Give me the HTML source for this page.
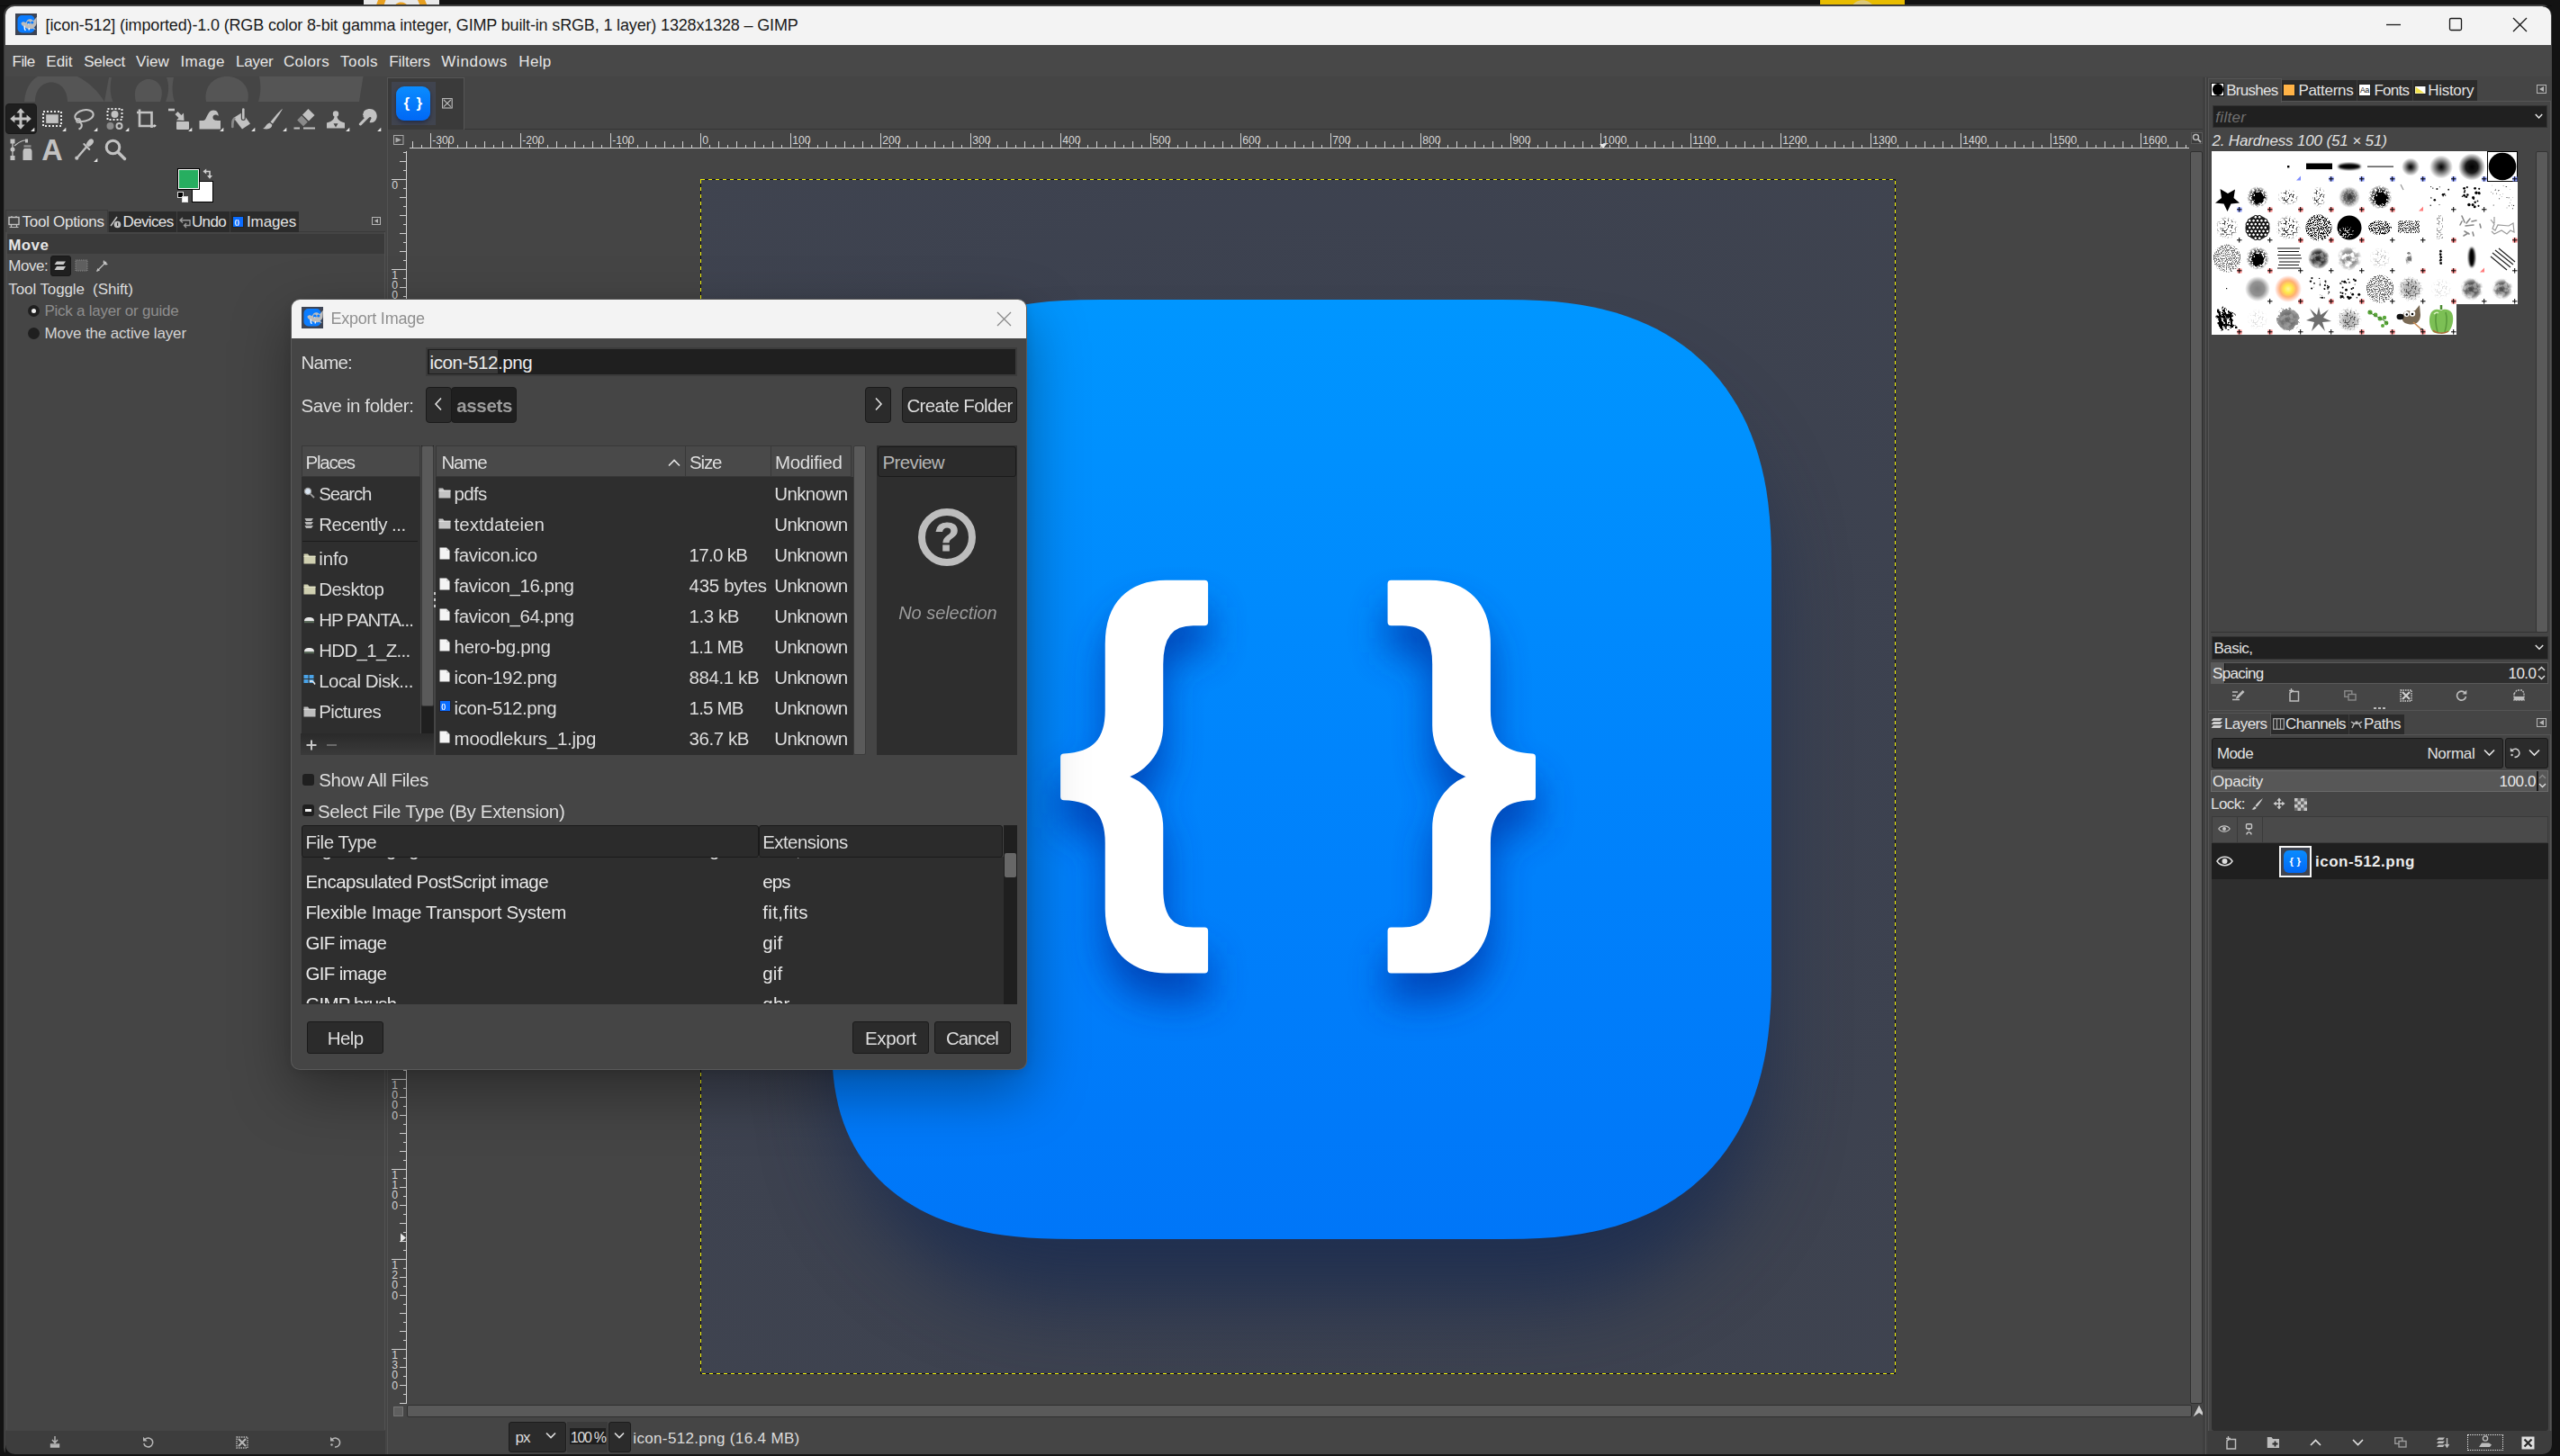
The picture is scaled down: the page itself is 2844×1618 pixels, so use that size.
<!DOCTYPE html>
<html><head><meta charset="utf-8"><title>GIMP</title>
<style>
html,body{margin:0;padding:0;background:#131313;}
body{width:2844px;height:1618px;overflow:hidden;position:relative;font-family:"Liberation Sans",sans-serif;}
div,span.t{position:absolute;box-sizing:border-box;}
span.t{white-space:pre;}
</style></head><body>
<div style="left:0px;top:0px;width:2844px;height:1618px;background:#131313;"></div>
<div style="left:404px;top:0px;width:84px;height:7px;background:#e9e9e9;"></div>
<svg style="position:absolute;left:404px;top:0px;" width="84" height="7" viewBox="0 0 84 7"><path d="M16 0 L24.5 0 L22 7 L13.5 7 Z M60 0 L68 0 L71 7 L63 7 Z" fill="#e8a020"/><path d="M34.5 7 C36 1 47 1 49 7 Z" fill="#e8a020"/></svg>
<div style="left:2022px;top:0px;width:94.3px;height:7px;background:#e8bc00;"></div>
<svg style="position:absolute;left:2056px;top:0px;" width="28" height="7" viewBox="0 0 28 7"><path d="M1.5 7 C5 -2 21 -2 25 7 Z" fill="#dcc878"/></svg>
<div style="left:0px;top:5.5px;width:2844px;height:1.5px;background:rgba(0,0,0,.28);"></div>
<div class="win" style="left:5px;top:6px;width:2830px;height:1612px;background:#454545;border-radius:11px 11px 9px 9px;box-shadow:0 0 0 1px #3a3a3a;overflow:hidden;"></div>
<div style="left:6px;top:7px;width:2828px;height:43px;background:#f3f3f3;border-radius:10px 10px 0 0;"></div>
<svg style="position:absolute;left:17px;top:15px" width="24" height="24" viewBox="0 0 24 24">
<rect width="24" height="24" fill="#3d4454"/>
<rect x="2.5" y="2" width="19" height="19.5" rx="5" fill="#0a7cff"/>
<g transform="translate(0.5 3.2)"><path d="M6 7.5 C7 5.5 9.5 5.5 11 7 L13 4 C15 2.5 18 3 19.5 5 L23.5 0.5 L23 8 C22.5 10 21.5 11.5 20 12 L22.5 15 L18.5 13.5 C16 14.5 13 14 11 12.5 L9 11 C7.5 10.5 6 9.5 6 7.5 Z" fill="#bdbdbd"/>
<circle cx="14.3" cy="7" r="1.8" fill="#0a7cff"/><circle cx="18.3" cy="6.8" r="1.6" fill="#0a7cff"/>
<path d="M9.5 10.5 L10 14.5 L11 15.5 M14.3 8 L14.3 9 M15 13 L14.5 15.3" stroke="#fff" stroke-width="1.3" fill="none"/></g>
</svg>
<span class="t" style="left:50.60px;top:18.76px;font-size:18px;line-height:18px;color:#1a1a1a;letter-spacing:-0.155px;">[icon-512] (imported)-1.0 (RGB color 8-bit gamma integer, GIMP built-in sRGB, 1 layer) 1328x1328 – GIMP</span>
<svg style="position:absolute;left:2640px;top:7px" width="194" height="43" viewBox="0 0 194 43" fill="none" stroke="#1a1a1a" stroke-width="1.3">
<path d="M11 20.5 H27"/>
<rect x="81.5" y="13.5" width="13" height="13" rx="1.5"/>
<path d="M152 13 L167 28 M167 13 L152 28"/>
</svg>
<div style="left:6px;top:50px;width:2828px;height:35px;background:#484848;"></div>
<span class="t" style="left:13.60px;top:60.11px;font-size:17px;line-height:17px;color:#e6e6e6;letter-spacing:-0.598px;">File</span>
<span class="t" style="left:51.30px;top:60.11px;font-size:17px;line-height:17px;color:#e6e6e6;letter-spacing:0.002px;">Edit</span>
<span class="t" style="left:93.20px;top:60.11px;font-size:17px;line-height:17px;color:#e6e6e6;letter-spacing:-0.241px;">Select</span>
<span class="t" style="left:151.00px;top:60.11px;font-size:17px;line-height:17px;color:#e6e6e6;letter-spacing:0.115px;">View</span>
<span class="t" style="left:200.40px;top:60.11px;font-size:17px;line-height:17px;color:#e6e6e6;letter-spacing:0.471px;">Image</span>
<span class="t" style="left:262.00px;top:60.11px;font-size:17px;line-height:17px;color:#e6e6e6;letter-spacing:-0.204px;">Layer</span>
<span class="t" style="left:315.00px;top:60.11px;font-size:17px;line-height:17px;color:#e6e6e6;letter-spacing:0.313px;">Colors</span>
<span class="t" style="left:378.00px;top:60.11px;font-size:17px;line-height:17px;color:#e6e6e6;letter-spacing:0.463px;">Tools</span>
<span class="t" style="left:432.30px;top:60.11px;font-size:17px;line-height:17px;color:#e6e6e6;letter-spacing:-0.082px;">Filters</span>
<span class="t" style="left:490.20px;top:60.11px;font-size:17px;line-height:17px;color:#e6e6e6;letter-spacing:0.691px;">Windows</span>
<span class="t" style="left:576.30px;top:60.11px;font-size:17px;line-height:17px;color:#e6e6e6;letter-spacing:0.310px;">Help</span>
<svg style="position:absolute;left:6px;top:85px" width="424" height="28" viewBox="6 85 424 28">
<g fill="#555555">
<path d="M27 113 C28 100 33 90 42 85 L86 85 C100 92 110 103 116 113 L75 113 C75 101 68 91.5 57 91.5 C46 91.5 39 101 39 113 Z"/>
<path d="M116 113 L121 86 L124 86 C122 95 122 104 125.5 113 Z"/>
<path d="M151 113 C146 95 158 88 165 88 C174 88 184 96 178 113 Z"/>
<path d="M184 113 C188 104 188 94 185 86 L193 86 C191 95 191 104 194 113 Z"/>
<path d="M229 113 C226 98 236 85 252 85 C268 85 279 98 275 113 Z"/>
<path d="M288 85 L403.5 85 L399 113 L287 113 C290 104 290 94 288 85 Z"/>
</g></svg>
<div style="left:6px;top:115px;width:35px;height:34px;background:#1f1f1f;border-radius:4px;border:1px solid #191919;"></div>
<svg style="position:absolute;left:11px;top:120px;" width="28" height="28" viewBox="0 0 28 28"><path fill="#c2c2c2" d="M12 0.2 L16.6 5.4 H13.5 V10.5 H18.6 V7.4 L23.8 12 L18.6 16.6 V13.5 H13.5 V18.6 H16.6 L12 23.8 L7.4 18.6 H10.5 V13.5 H5.4 V16.6 L0.2 12 L5.4 7.4 V10.5 H10.5 V5.4 H7.4 Z"/><path d="M27.3 21.8 V26 H23.1 Z" fill="#e4e4e4"/></svg>
<svg style="position:absolute;left:46px;top:120px;" width="28" height="28" viewBox="0 0 28 28"><rect x="2" y="4" width="20" height="16" fill="none" stroke="#e8e8e8" stroke-width="2" stroke-dasharray="2 2"/><rect x="5.2" y="7.3" width="13.6" height="9.6" fill="#c2c2c2"/><path d="M27.3 21.8 V26 H23.1 Z" fill="#e4e4e4"/></svg>
<svg style="position:absolute;left:81px;top:120px;" width="28" height="28" viewBox="0 0 28 28"><ellipse cx="12.5" cy="8.5" rx="10.3" ry="6.2" transform="rotate(-12 12.5 8.5)" fill="none" stroke="#c2c2c2" stroke-width="2"/><circle cx="6" cy="14" r="2.2" fill="none" stroke="#c2c2c2" stroke-width="1.4"/><path d="M7.5 15.5 C11 18 10.5 22 6.5 23.5" fill="none" stroke="#c2c2c2" stroke-width="2"/><path d="M27.3 21.8 V26 H23.1 Z" fill="#e4e4e4"/></svg>
<svg style="position:absolute;left:116px;top:120px;" width="28" height="28" viewBox="0 0 28 28"><rect x="3.5" y="1" width="16" height="12" fill="none" stroke="#e8e8e8" stroke-width="2" stroke-dasharray="2 2"/><circle cx="11.5" cy="7" r="4" fill="#c2c2c2"/><circle cx="6.5" cy="20" r="4" fill="#8a8a8a"/><circle cx="16.5" cy="20" r="3" fill="none" stroke="#c2c2c2" stroke-width="2"/><path d="M27.3 21.8 V26 H23.1 Z" fill="#e4e4e4"/></svg>
<svg style="position:absolute;left:151px;top:120px;" width="28" height="28" viewBox="0 0 28 28"><path d="M4 1.5 V20 H21" fill="none" stroke="#c2c2c2" stroke-width="2.6"/><path d="M1 5 H17.5 V22" fill="none" stroke="#c2c2c2" stroke-width="2.6"/><path d="M20.5 18 L22.8 19.8 L20.5 21.6 Z" fill="#e4e4e4"/></svg>
<svg style="position:absolute;left:186px;top:120px;" width="28" height="28" viewBox="0 0 28 28"><path d="M1 2 H8" stroke="#c2c2c2" stroke-width="2.6"/><path d="M9 4 L13 8 L15.5 5.5 L16 14 L7.5 13.5 L10 11 L6 7 Z" fill="#c2c2c2" transform="translate(2.5,0)"/><rect x="10" y="15" width="14" height="9" rx="1" fill="#c2c2c2"/><path d="M27.3 21.8 V26 H23.1 Z" fill="#e4e4e4"/></svg>
<svg style="position:absolute;left:221px;top:120px;" width="28" height="28" viewBox="0 0 28 28"><path d="M0.5 23.5 V14 H5 C9 14 9 2.5 16 2.5 C20.5 2.5 22 6 21.5 9 C19 6.5 15 7.5 15.5 11 C16 14 19.5 14 24 14 V23.5 Z" fill="#c2c2c2"/><path d="M27.3 21.8 V26 H23.1 Z" fill="#e4e4e4"/></svg>
<svg style="position:absolute;left:256px;top:120px;" width="28" height="28" viewBox="0 0 28 28"><path d="M3.5 11 L13 5 L22 17.5 L13 23.5 Z" fill="#c2c2c2"/><path d="M4.5 11.5 C2.5 13 2.3 15 2.3 21" fill="none" stroke="#8a8a8a" stroke-width="2.6" stroke-linecap="round"/><path d="M14.3 1 V11.5" stroke="#454545" stroke-width="5" stroke-linecap="round"/><path d="M14.3 1.5 V11.5" stroke="#c2c2c2" stroke-width="2.6" stroke-linecap="round"/><path d="M27.3 21.8 V26 H23.1 Z" fill="#e4e4e4"/></svg>
<svg style="position:absolute;left:291px;top:120px;" width="28" height="28" viewBox="0 0 28 28"><path d="M23 0.8 C19 4 13 11 9.5 15.5 L12 17.5 C16 12 21 5 23 0.8 Z" fill="#c2c2c2"/><path d="M8.7 16.5 L11.2 18.6 C11.5 22 8 24.5 1 23 C4.5 21.5 4.5 17.5 8.7 16.5 Z" fill="#c2c2c2"/><path d="M27.3 21.8 V26 H23.1 Z" fill="#e4e4e4"/></svg>
<svg style="position:absolute;left:326px;top:120px;" width="28" height="28" viewBox="0 0 28 28"><path d="M16.5 1 L23.5 8 L17 14.5 L10 7.5 Z" fill="#c2c2c2"/><path d="M9 8.6 L15.8 15.5 L11 20.3 L4.2 13.5 Z" fill="#8a8a8a"/><path d="M0.5 22.5 H7 M11 22.5 H24" stroke="#c2c2c2" stroke-width="2"/></svg>
<svg style="position:absolute;left:361px;top:120px;" width="28" height="28" viewBox="0 0 28 28"><circle cx="12" cy="6.5" r="3.2" fill="#c2c2c2"/><path d="M10.6 8 H13.4 C13.4 12 15 14.5 22 16.5 V22.5 H2 V16.5 C9 14.5 10.6 12 10.6 8 Z" fill="#c2c2c2"/><path d="M9.5 17.3 H14.5 L12 21.5 Z" fill="#454545"/><path d="M27.3 21.8 V26 H23.1 Z" fill="#e4e4e4"/></svg>
<svg style="position:absolute;left:396px;top:120px;" width="28" height="28" viewBox="0 0 28 28"><path d="M12 1.5 C18 -0.5 24 4 22.5 11 C21.5 15.5 17.5 17 14.5 16 L16 12.5 C17.5 11 15.5 9 14 10.5 L5.5 19 C4 20.5 1.8 18.6 3.2 17 L9 11 C7.5 10.5 7.2 9.5 7.8 8.6 C6.6 7.8 7 6.4 7.8 5.8 C7.4 3.8 9.5 2.2 12 1.5 Z" fill="#c2c2c2"/><path d="M27.3 21.8 V26 H23.1 Z" fill="#e4e4e4"/></svg>
<svg style="position:absolute;left:11px;top:154px;" width="28" height="28" viewBox="0 0 28 28"><rect x="0.5" y="0.5" width="5" height="5" fill="#c2c2c2"/><rect x="0.5" y="19" width="5" height="5" fill="#c2c2c2"/><circle cx="3" cy="12" r="2.5" fill="#c2c2c2"/><path d="M3 5 V20" stroke="#c2c2c2" stroke-width="1.3"/><path d="M5 8 C9 5 12 2 17 2" fill="none" stroke="#c2c2c2" stroke-width="1.2"/><rect x="17" y="0.5" width="3" height="4" fill="#c2c2c2"/><rect x="15.5" y="7.2" width="8" height="2.6" fill="#8a8a8a"/><path d="M16 11 H23 C24 12 24.5 13 24.5 14 V24 H14.5 V14 C14.5 13 15 12 16 11 Z" fill="#c2c2c2"/></svg>
<svg style="position:absolute;left:46px;top:154px;" width="28" height="28" viewBox="0 0 28 28"><text x="12" y="23.6" font-family="Liberation Sans, sans-serif" font-weight="bold" font-size="32.5" text-anchor="middle" fill="#c2c2c2">A</text></svg>
<svg style="position:absolute;left:81px;top:154px;" width="28" height="28" viewBox="0 0 28 28"><ellipse cx="19" cy="4.6" rx="3" ry="4.8" transform="rotate(40 19 4.6)" fill="#c2c2c2"/><path d="M12.3 6 L18.3 12" stroke="#c2c2c2" stroke-width="2" stroke-linecap="round"/><path d="M15.5 8.8 L5.6 20.2" stroke="#c2c2c2" stroke-width="2.4"/><circle cx="4.3" cy="21.7" r="2.1" fill="#c2c2c2"/><path d="M27.3 21.8 V26 H23.1 Z" fill="#e4e4e4"/></svg>
<svg style="position:absolute;left:116px;top:154px;" width="28" height="28" viewBox="0 0 28 28"><circle cx="9.5" cy="9.5" r="7.3" fill="none" stroke="#c2c2c2" stroke-width="3"/><path d="M15 15 L22.5 22.5" stroke="#c2c2c2" stroke-width="3.4" stroke-linecap="round"/></svg>
<div style="left:213px;top:201px;width:24px;height:24px;background:#ffffff;border:1px solid #000;box-shadow:inset 0 0 0 1px #fff;"></div>
<div style="left:197px;top:187px;width:25px;height:24px;background:#27ae60;border:1px solid #000;box-shadow:inset 0 0 0 1px #fff;"></div>
<svg style="position:absolute;left:225px;top:187px;" width="13" height="12" viewBox="0 0 13 12"><path d="M1.5 3.5 H8 V9.5" fill="none" stroke="#cfcfcf" stroke-width="1.6"/><path d="M4.2 0.5 L0.5 3.5 L4.2 6.5 Z M5 8 L8 11.8 L11 8 Z" fill="#cfcfcf"/></svg>
<div style="left:197px;top:213px;width:7px;height:7px;background:#000;border:1px solid #ddd;"></div>
<div style="left:202px;top:218px;width:7px;height:7px;background:#fff;border:1px solid #ddd;"></div>
<div style="left:6px;top:257px;width:422px;height:1px;background:#3a3a3a;"></div>
<div style="left:119.5px;top:235px;width:212.5px;height:22.5px;background:#2b2b2b;"></div>
<div style="left:119.5px;top:235px;width:1px;height:22.5px;background:#3a3a3a;"></div>
<div style="left:196px;top:235px;width:1px;height:22.5px;background:#3f3f3f;"></div>
<div style="left:255px;top:235px;width:1px;height:22.5px;background:#3f3f3f;"></div>
<div style="left:6px;top:233px;width:114px;height:25px;background:#454545;border:1px solid #3a3a3a;border-bottom:none;"></div>
<svg style="position:absolute;left:9px;top:240px;" width="13" height="14" viewBox="0 0 13 14"><rect x="1" y="1.5" width="11" height="8" fill="none" stroke="#c2c2c2" stroke-width="1.4"/><path d="M4 0 V1.5 M9 0 V1.5 M1.5 12.5 H11.5 M3.5 10 V12.5 M9.5 10 V12.5" stroke="#c2c2c2" stroke-width="1.2"/></svg>
<span class="t" style="left:24.60px;top:237.91px;font-size:17px;line-height:17px;color:#e2e2e2;letter-spacing:-0.291px;">Tool Options</span>
<svg style="position:absolute;left:122px;top:240px;" width="13" height="14" viewBox="0 0 13 14"><path d="M1 11 L8 1" stroke="#c2c2c2" stroke-width="1.5"/><circle cx="8.5" cy="9.5" r="3.8" fill="#c2c2c2"/><rect x="8" y="7.5" width="1.2" height="3.5" fill="#2b2b2b"/></svg>
<span class="t" style="left:136.50px;top:238.21px;font-size:17px;line-height:17px;color:#e2e2e2;letter-spacing:-0.637px;">Devices</span>
<svg style="position:absolute;left:199px;top:241px;" width="13" height="13" viewBox="0 0 13 13"><path d="M4 1 L1 3.8 L4 6.6 M1 3.8 H12 V9.5 H6 M8 7 L5.5 9.5 L8 12" fill="none" stroke="#9a9a9a" stroke-width="1.4"/></svg>
<span class="t" style="left:213.00px;top:238.21px;font-size:17px;line-height:17px;color:#e2e2e2;letter-spacing:-0.659px;">Undo</span>
<div style="left:258px;top:240px;width:13px;height:13px;background:#0a6cff;border:1px solid #222;"></div>
<span class="t" style="left:260.50px;top:243.23px;font-size:8px;line-height:8px;color:#fff;font-weight:bold;">()</span>
<span class="t" style="left:274.00px;top:238.21px;font-size:17px;line-height:17px;color:#e2e2e2;letter-spacing:-0.124px;">Images</span>
<svg style="position:absolute;left:413px;top:240.5px;" width="10" height="9" viewBox="0 0 10 9"><rect x=".5" y=".5" width="9" height="8" fill="none" stroke="#b5b5b5"/><path d="M7 2 V7 L3 4.5 Z" fill="#b5b5b5"/></svg>
<div style="left:7px;top:258px;width:421px;height:1331px;background:#454545;"></div>
<div style="left:7px;top:260px;width:420px;height:22px;background:#3a3a3a;"></div>
<span class="t" style="left:9.30px;top:263.61px;font-size:17px;line-height:17px;color:#e6e6e6;letter-spacing:0.387px;font-weight:bold;">Move</span>
<span class="t" style="left:9.30px;top:287.11px;font-size:17px;line-height:17px;color:#dcdcdc;letter-spacing:-0.458px;">Move:</span>
<div style="left:55.5px;top:284px;width:23px;height:23px;background:#1f1f1f;border:1px solid #181818;border-radius:3px;"></div>
<svg style="position:absolute;left:60px;top:289px;" width="14" height="13" viewBox="0 0 14 13"><path d="M3 1.5 H13 L10.5 5 H0.5 Z M3 7 H13 L10.5 11 H0.5 Z" fill="#c8c8c8"/></svg>
<svg style="position:absolute;left:83px;top:288px;" width="16" height="15" viewBox="0 0 16 15"><rect x="1" y="1" width="13" height="12" fill="#5f5f5f" stroke="#8a8a8a" stroke-dasharray="1 1"/></svg>
<svg style="position:absolute;left:106px;top:288px;" width="15" height="15" viewBox="0 0 15 15"><path d="M2 13 L12 3" stroke="#c2c2c2" stroke-width="1.3"/><path d="M9 1 L14 6 L11 6.5 L8.5 4 Z M2.5 10 L5 12.5 L1 14 Z" fill="#c2c2c2"/></svg>
<span class="t" style="left:9.30px;top:313.11px;font-size:17px;line-height:17px;color:#dcdcdc;letter-spacing:-0.104px;">Tool Toggle  (Shift)</span>
<div style="left:30.5px;top:338.5px;width:13px;height:13px;background:#1f1f1f;border-radius:50%;"></div>
<div style="left:34.5px;top:342.5px;width:5px;height:5px;background:#f0f0f0;border-radius:50%;"></div>
<span class="t" style="left:49.40px;top:336.61px;font-size:17px;line-height:17px;color:#8e8e8e;letter-spacing:-0.239px;">Pick a layer or guide</span>
<div style="left:30.5px;top:363.5px;width:13px;height:13px;background:#1f1f1f;border-radius:50%;"></div>
<span class="t" style="left:49.40px;top:361.91px;font-size:17px;line-height:17px;color:#d4d4d4;letter-spacing:-0.148px;">Move the active layer</span>
<div style="left:6px;top:1590px;width:422px;height:26px;background:#3d3d3d;"></div>
<svg style="position:absolute;left:55px;top:1596px;" width="12" height="13" viewBox="0 0 12 13"><path d="M6 0 V6 M3 4 L6 7.5 L9 4 M1.5 9 H10.5 V12 H1.5 Z" fill="none" stroke="#b8b8b8" stroke-width="1.4"/><rect x="2" y="9.5" width="8" height="2.5" fill="#b8b8b8"/></svg>
<svg style="position:absolute;left:158px;top:1596px;" width="13" height="13" viewBox="0 0 13 13"><path d="M3 3.5 A5 5 0 1 1 1.8 8" fill="none" stroke="#b8b8b8" stroke-width="1.5"/><path d="M1 0.8 V5.5 H5.7 Z" fill="#b8b8b8"/></svg>
<svg style="position:absolute;left:261.5px;top:1595.5px;" width="14" height="14" viewBox="0 0 14 14"><rect x="1" y="1" width="12" height="12" fill="none" stroke="#b8b8b8" stroke-width="1.4" stroke-dasharray="1.5 1"/><path d="M3 3 L11 11 M11 3 L3 11" stroke="#b8b8b8" stroke-width="2"/></svg>
<svg style="position:absolute;left:366px;top:1596px;" width="13" height="13" viewBox="0 0 13 13"><path d="M3 3.5 A5 5 0 1 1 6 12" fill="none" stroke="#b8b8b8" stroke-width="1.5"/><path d="M1 0.8 V5.5 H5.7 Z" fill="#b8b8b8"/><circle cx="2.5" cy="9.5" r="1.2" fill="#b8b8b8"/></svg>
<div style="left:430px;top:86px;width:1px;height:1530px;background:#525252;"></div>
<div style="left:427px;top:258px;width:1px;height:1331px;background:#525252;"></div>
<div style="left:7px;top:258px;width:1px;height:1331px;background:#4e4e4e;"></div>
<div style="left:431px;top:143px;width:2016px;height:1px;background:#353535;"></div>
<div style="left:430px;top:86px;width:86px;height:58px;background:#3a3a3a;border:1px solid #555;border-bottom:none;"></div>
<div style="left:435px;top:91px;width:48.5px;height:48px;background:#40444f;"></div>
<div style="left:440px;top:95.5px;width:38px;height:38px;background:linear-gradient(#0a8cff,#0068f5);border-radius:9px;box-shadow:0 2px 4px rgba(10,20,60,.55);"></div>
<span class="t" style="left:448.50px;top:106.11px;font-size:17px;line-height:17px;color:#fff;letter-spacing:1.348px;font-weight:bold;">{ }</span>
<svg style="position:absolute;left:490.5px;top:108.8px;" width="12" height="12" viewBox="0 0 12 12"><rect x=".6" y=".6" width="10.6" height="10.4" fill="none" stroke="#bdbdbd" stroke-width="1.1"/><path d="M2 2 L9.8 9.6 M9.8 2 L2 9.6" stroke="#bdbdbd" stroke-width="1.1"/></svg>
<svg style="position:absolute;left:437px;top:150px;" width="12" height="11" viewBox="0 0 12 11"><rect x=".5" y=".5" width="10.5" height="10" fill="none" stroke="#aaa"/><path d="M2.5 2.5 L9 5.5 L2.5 8.5 Z" fill="#aaa"/></svg>
<svg style="position:absolute;left:0px;top:0px;pointer-events:none;" width="2844" height="170" viewBox="0 0 2844 170"><path d="M458.5 157V165 M468.5 161V165 M478.5 148V165 M488.5 161V165 M498.5 157V165 M508.5 161V165 M518.5 157V165 M528.5 161V165 M538.5 157V165 M548.5 161V165 M558.5 157V165 M568.5 161V165 M578.5 148V165 M588.5 161V165 M598.5 157V165 M608.5 161V165 M618.5 157V165 M628.5 161V165 M638.5 157V165 M648.5 161V165 M658.5 157V165 M668.5 161V165 M678.5 148V165 M688.5 161V165 M698.5 157V165 M708.5 161V165 M718.5 157V165 M728.5 161V165 M738.5 157V165 M748.5 161V165 M758.5 157V165 M768.5 161V165 M778.5 148V165 M788.5 161V165 M798.5 157V165 M808.5 161V165 M818.5 157V165 M828.5 161V165 M838.5 157V165 M848.5 161V165 M858.5 157V165 M868.5 161V165 M878.5 148V165 M888.5 161V165 M898.5 157V165 M908.5 161V165 M918.5 157V165 M928.5 161V165 M938.5 157V165 M948.5 161V165 M958.5 157V165 M968.5 161V165 M978.5 148V165 M988.5 161V165 M998.5 157V165 M1008.5 161V165 M1018.5 157V165 M1028.5 161V165 M1038.5 157V165 M1048.5 161V165 M1058.5 157V165 M1068.5 161V165 M1078.5 148V165 M1088.5 161V165 M1098.5 157V165 M1108.5 161V165 M1118.5 157V165 M1128.5 161V165 M1138.5 157V165 M1148.5 161V165 M1158.5 157V165 M1168.5 161V165 M1178.5 148V165 M1188.5 161V165 M1198.5 157V165 M1208.5 161V165 M1218.5 157V165 M1228.5 161V165 M1238.5 157V165 M1248.5 161V165 M1258.5 157V165 M1268.5 161V165 M1278.5 148V165 M1288.5 161V165 M1298.5 157V165 M1308.5 161V165 M1318.5 157V165 M1328.5 161V165 M1338.5 157V165 M1348.5 161V165 M1358.5 157V165 M1368.5 161V165 M1378.5 148V165 M1388.5 161V165 M1398.5 157V165 M1408.5 161V165 M1418.5 157V165 M1428.5 161V165 M1438.5 157V165 M1448.5 161V165 M1458.5 157V165 M1468.5 161V165 M1478.5 148V165 M1488.5 161V165 M1498.5 157V165 M1508.5 161V165 M1518.5 157V165 M1528.5 161V165 M1538.5 157V165 M1548.5 161V165 M1558.5 157V165 M1568.5 161V165 M1578.5 148V165 M1588.5 161V165 M1598.5 157V165 M1608.5 161V165 M1618.5 157V165 M1628.5 161V165 M1638.5 157V165 M1648.5 161V165 M1658.5 157V165 M1668.5 161V165 M1678.5 148V165 M1688.5 161V165 M1698.5 157V165 M1708.5 161V165 M1718.5 157V165 M1728.5 161V165 M1738.5 157V165 M1748.5 161V165 M1758.5 157V165 M1768.5 161V165 M1778.5 148V165 M1788.5 161V165 M1798.5 157V165 M1808.5 161V165 M1818.5 157V165 M1828.5 161V165 M1838.5 157V165 M1848.5 161V165 M1858.5 157V165 M1868.5 161V165 M1878.5 148V165 M1888.5 161V165 M1898.5 157V165 M1908.5 161V165 M1918.5 157V165 M1928.5 161V165 M1938.5 157V165 M1948.5 161V165 M1958.5 157V165 M1968.5 161V165 M1978.5 148V165 M1988.5 161V165 M1998.5 157V165 M2008.5 161V165 M2018.5 157V165 M2028.5 161V165 M2038.5 157V165 M2048.5 161V165 M2058.5 157V165 M2068.5 161V165 M2078.5 148V165 M2088.5 161V165 M2098.5 157V165 M2108.5 161V165 M2118.5 157V165 M2128.5 161V165 M2138.5 157V165 M2148.5 161V165 M2158.5 157V165 M2168.5 161V165 M2178.5 148V165 M2188.5 161V165 M2198.5 157V165 M2208.5 161V165 M2218.5 157V165 M2228.5 161V165 M2238.5 157V165 M2248.5 161V165 M2258.5 157V165 M2268.5 161V165 M2278.5 148V165 M2288.5 161V165 M2298.5 157V165 M2308.5 161V165 M2318.5 157V165 M2328.5 161V165 M2338.5 157V165 M2348.5 161V165 M2358.5 157V165 M2368.5 161V165 M2378.5 148V165 M2388.5 161V165 M2398.5 157V165 M2408.5 161V165 M2418.5 157V165 M2428.5 161V165 M455 164.5H2432" stroke="#d2d2d2" stroke-width="1" fill="none" shape-rendering="crispEdges"/><path d="M1777 160 H1785 L1781 165 Z" fill="#e8e8e8"/></svg>
<span class="t" style="left:480.20px;top:149.67px;font-size:12.2px;line-height:12.2px;color:#d6d6d6;">-300</span>
<span class="t" style="left:580.20px;top:149.67px;font-size:12.2px;line-height:12.2px;color:#d6d6d6;">-200</span>
<span class="t" style="left:680.20px;top:149.67px;font-size:12.2px;line-height:12.2px;color:#d6d6d6;">-100</span>
<span class="t" style="left:780.20px;top:149.67px;font-size:12.2px;line-height:12.2px;color:#d6d6d6;">0</span>
<span class="t" style="left:880.20px;top:149.67px;font-size:12.2px;line-height:12.2px;color:#d6d6d6;">100</span>
<span class="t" style="left:980.20px;top:149.67px;font-size:12.2px;line-height:12.2px;color:#d6d6d6;">200</span>
<span class="t" style="left:1080.20px;top:149.67px;font-size:12.2px;line-height:12.2px;color:#d6d6d6;">300</span>
<span class="t" style="left:1180.20px;top:149.67px;font-size:12.2px;line-height:12.2px;color:#d6d6d6;">400</span>
<span class="t" style="left:1280.20px;top:149.67px;font-size:12.2px;line-height:12.2px;color:#d6d6d6;">500</span>
<span class="t" style="left:1380.20px;top:149.67px;font-size:12.2px;line-height:12.2px;color:#d6d6d6;">600</span>
<span class="t" style="left:1480.20px;top:149.67px;font-size:12.2px;line-height:12.2px;color:#d6d6d6;">700</span>
<span class="t" style="left:1580.20px;top:149.67px;font-size:12.2px;line-height:12.2px;color:#d6d6d6;">800</span>
<span class="t" style="left:1680.20px;top:149.67px;font-size:12.2px;line-height:12.2px;color:#d6d6d6;">900</span>
<span class="t" style="left:1780.20px;top:149.67px;font-size:12.2px;line-height:12.2px;color:#d6d6d6;">1000</span>
<span class="t" style="left:1880.20px;top:149.67px;font-size:12.2px;line-height:12.2px;color:#d6d6d6;">1100</span>
<span class="t" style="left:1980.20px;top:149.67px;font-size:12.2px;line-height:12.2px;color:#d6d6d6;">1200</span>
<span class="t" style="left:2080.20px;top:149.67px;font-size:12.2px;line-height:12.2px;color:#d6d6d6;">1300</span>
<span class="t" style="left:2180.20px;top:149.67px;font-size:12.2px;line-height:12.2px;color:#d6d6d6;">1400</span>
<span class="t" style="left:2280.20px;top:149.67px;font-size:12.2px;line-height:12.2px;color:#d6d6d6;">1500</span>
<span class="t" style="left:2380.20px;top:149.67px;font-size:12.2px;line-height:12.2px;color:#d6d6d6;">1600</span>
<svg style="position:absolute;left:430px;top:0px;pointer-events:none;" width="24" height="1618" viewBox="430 0 24 1618"><path d="M447.5 169.5H452 M444 179.5H452 M447.5 189.5H452 M435 199.5H452 M447.5 209.5H452 M444 219.5H452 M447.5 229.5H452 M444 239.5H452 M447.5 249.5H452 M444 259.5H452 M447.5 269.5H452 M444 279.5H452 M447.5 289.5H452 M435 299.5H452 M447.5 309.5H452 M444 319.5H452 M447.5 329.5H452 M444 339.5H452 M447.5 349.5H452 M444 359.5H452 M447.5 369.5H452 M444 379.5H452 M447.5 389.5H452 M435 399.5H452 M447.5 409.5H452 M444 419.5H452 M447.5 429.5H452 M444 439.5H452 M447.5 449.5H452 M444 459.5H452 M447.5 469.5H452 M444 479.5H452 M447.5 489.5H452 M435 499.5H452 M447.5 509.5H452 M444 519.5H452 M447.5 529.5H452 M444 539.5H452 M447.5 549.5H452 M444 559.5H452 M447.5 569.5H452 M444 579.5H452 M447.5 589.5H452 M435 599.5H452 M447.5 609.5H452 M444 619.5H452 M447.5 629.5H452 M444 639.5H452 M447.5 649.5H452 M444 659.5H452 M447.5 669.5H452 M444 679.5H452 M447.5 689.5H452 M435 699.5H452 M447.5 709.5H452 M444 719.5H452 M447.5 729.5H452 M444 739.5H452 M447.5 749.5H452 M444 759.5H452 M447.5 769.5H452 M444 779.5H452 M447.5 789.5H452 M435 799.5H452 M447.5 809.5H452 M444 819.5H452 M447.5 829.5H452 M444 839.5H452 M447.5 849.5H452 M444 859.5H452 M447.5 869.5H452 M444 879.5H452 M447.5 889.5H452 M435 899.5H452 M447.5 909.5H452 M444 919.5H452 M447.5 929.5H452 M444 939.5H452 M447.5 949.5H452 M444 959.5H452 M447.5 969.5H452 M444 979.5H452 M447.5 989.5H452 M435 999.5H452 M447.5 1009.5H452 M444 1019.5H452 M447.5 1029.5H452 M444 1039.5H452 M447.5 1049.5H452 M444 1059.5H452 M447.5 1069.5H452 M444 1079.5H452 M447.5 1089.5H452 M435 1099.5H452 M447.5 1109.5H452 M444 1119.5H452 M447.5 1129.5H452 M444 1139.5H452 M447.5 1149.5H452 M444 1159.5H452 M447.5 1169.5H452 M444 1179.5H452 M447.5 1189.5H452 M435 1199.5H452 M447.5 1209.5H452 M444 1219.5H452 M447.5 1229.5H452 M444 1239.5H452 M447.5 1249.5H452 M444 1259.5H452 M447.5 1269.5H452 M444 1279.5H452 M447.5 1289.5H452 M435 1299.5H452 M447.5 1309.5H452 M444 1319.5H452 M447.5 1329.5H452 M444 1339.5H452 M447.5 1349.5H452 M444 1359.5H452 M447.5 1369.5H452 M444 1379.5H452 M447.5 1389.5H452 M435 1399.5H452 M447.5 1409.5H452 M444 1419.5H452 M447.5 1429.5H452 M444 1439.5H452 M447.5 1449.5H452 M444 1459.5H452 M447.5 1469.5H452 M444 1479.5H452 M447.5 1489.5H452 M435 1499.5H452 M447.5 1509.5H452 M444 1519.5H452 M447.5 1529.5H452 M444 1539.5H452 M447.5 1549.5H452 M444 1559.5H452 M451.5 168V1559" stroke="#d2d2d2" stroke-width="1" fill="none" shape-rendering="crispEdges"/><path d="M445 1370.5 V1380.5 L451 1375.5 Z" fill="#e8e8e8"/></svg>
<span class="t" style="left:435.20px;top:200.27px;font-size:12.2px;line-height:12.2px;color:#d6d6d6;">0</span>
<span class="t" style="left:435.20px;top:300.27px;font-size:12.2px;line-height:12.2px;color:#d6d6d6;">1</span>
<span class="t" style="left:435.20px;top:311.37px;font-size:12.2px;line-height:12.2px;color:#d6d6d6;">0</span>
<span class="t" style="left:435.20px;top:322.47px;font-size:12.2px;line-height:12.2px;color:#d6d6d6;">0</span>
<span class="t" style="left:435.20px;top:400.27px;font-size:12.2px;line-height:12.2px;color:#d6d6d6;">2</span>
<span class="t" style="left:435.20px;top:411.37px;font-size:12.2px;line-height:12.2px;color:#d6d6d6;">0</span>
<span class="t" style="left:435.20px;top:422.47px;font-size:12.2px;line-height:12.2px;color:#d6d6d6;">0</span>
<span class="t" style="left:435.20px;top:500.27px;font-size:12.2px;line-height:12.2px;color:#d6d6d6;">3</span>
<span class="t" style="left:435.20px;top:511.37px;font-size:12.2px;line-height:12.2px;color:#d6d6d6;">0</span>
<span class="t" style="left:435.20px;top:522.47px;font-size:12.2px;line-height:12.2px;color:#d6d6d6;">0</span>
<span class="t" style="left:435.20px;top:600.27px;font-size:12.2px;line-height:12.2px;color:#d6d6d6;">4</span>
<span class="t" style="left:435.20px;top:611.37px;font-size:12.2px;line-height:12.2px;color:#d6d6d6;">0</span>
<span class="t" style="left:435.20px;top:622.47px;font-size:12.2px;line-height:12.2px;color:#d6d6d6;">0</span>
<span class="t" style="left:435.20px;top:700.27px;font-size:12.2px;line-height:12.2px;color:#d6d6d6;">5</span>
<span class="t" style="left:435.20px;top:711.37px;font-size:12.2px;line-height:12.2px;color:#d6d6d6;">0</span>
<span class="t" style="left:435.20px;top:722.47px;font-size:12.2px;line-height:12.2px;color:#d6d6d6;">0</span>
<span class="t" style="left:435.20px;top:800.27px;font-size:12.2px;line-height:12.2px;color:#d6d6d6;">6</span>
<span class="t" style="left:435.20px;top:811.37px;font-size:12.2px;line-height:12.2px;color:#d6d6d6;">0</span>
<span class="t" style="left:435.20px;top:822.47px;font-size:12.2px;line-height:12.2px;color:#d6d6d6;">0</span>
<span class="t" style="left:435.20px;top:900.27px;font-size:12.2px;line-height:12.2px;color:#d6d6d6;">7</span>
<span class="t" style="left:435.20px;top:911.37px;font-size:12.2px;line-height:12.2px;color:#d6d6d6;">0</span>
<span class="t" style="left:435.20px;top:922.47px;font-size:12.2px;line-height:12.2px;color:#d6d6d6;">0</span>
<span class="t" style="left:435.20px;top:1000.27px;font-size:12.2px;line-height:12.2px;color:#d6d6d6;">8</span>
<span class="t" style="left:435.20px;top:1011.37px;font-size:12.2px;line-height:12.2px;color:#d6d6d6;">0</span>
<span class="t" style="left:435.20px;top:1022.47px;font-size:12.2px;line-height:12.2px;color:#d6d6d6;">0</span>
<span class="t" style="left:435.20px;top:1100.27px;font-size:12.2px;line-height:12.2px;color:#d6d6d6;">9</span>
<span class="t" style="left:435.20px;top:1111.37px;font-size:12.2px;line-height:12.2px;color:#d6d6d6;">0</span>
<span class="t" style="left:435.20px;top:1122.47px;font-size:12.2px;line-height:12.2px;color:#d6d6d6;">0</span>
<span class="t" style="left:435.20px;top:1200.27px;font-size:12.2px;line-height:12.2px;color:#d6d6d6;">1</span>
<span class="t" style="left:435.20px;top:1211.37px;font-size:12.2px;line-height:12.2px;color:#d6d6d6;">0</span>
<span class="t" style="left:435.20px;top:1222.47px;font-size:12.2px;line-height:12.2px;color:#d6d6d6;">0</span>
<span class="t" style="left:435.20px;top:1233.57px;font-size:12.2px;line-height:12.2px;color:#d6d6d6;">0</span>
<span class="t" style="left:435.20px;top:1300.27px;font-size:12.2px;line-height:12.2px;color:#d6d6d6;">1</span>
<span class="t" style="left:435.20px;top:1311.37px;font-size:12.2px;line-height:12.2px;color:#d6d6d6;">1</span>
<span class="t" style="left:435.20px;top:1322.47px;font-size:12.2px;line-height:12.2px;color:#d6d6d6;">0</span>
<span class="t" style="left:435.20px;top:1333.57px;font-size:12.2px;line-height:12.2px;color:#d6d6d6;">0</span>
<span class="t" style="left:435.20px;top:1400.27px;font-size:12.2px;line-height:12.2px;color:#d6d6d6;">1</span>
<span class="t" style="left:435.20px;top:1411.37px;font-size:12.2px;line-height:12.2px;color:#d6d6d6;">2</span>
<span class="t" style="left:435.20px;top:1422.47px;font-size:12.2px;line-height:12.2px;color:#d6d6d6;">0</span>
<span class="t" style="left:435.20px;top:1433.57px;font-size:12.2px;line-height:12.2px;color:#d6d6d6;">0</span>
<span class="t" style="left:435.20px;top:1500.27px;font-size:12.2px;line-height:12.2px;color:#d6d6d6;">1</span>
<span class="t" style="left:435.20px;top:1511.37px;font-size:12.2px;line-height:12.2px;color:#d6d6d6;">3</span>
<span class="t" style="left:435.20px;top:1522.47px;font-size:12.2px;line-height:12.2px;color:#d6d6d6;">0</span>
<span class="t" style="left:435.20px;top:1533.57px;font-size:12.2px;line-height:12.2px;color:#d6d6d6;">0</span>
<div style="left:778px;top:199px;width:1328px;height:1328px;background:#40444f;overflow:hidden;">
<div style="left:0;top:0;width:1328px;height:1328px;background:radial-gradient(ellipse 1100px 1000px at 664px 700px,rgba(58,64,80,1) 0%,rgba(58,64,80,.6) 60%,rgba(64,68,78,0) 100%);"></div>
</div>
<div style="left:778px;top:199px;width:1328px;height:1328px;overflow:hidden;"><div style="left:166px;top:174px;width:1004px;height:1004px;border-radius:235px;background:rgb(29,46,80);box-shadow:0 56px 85px 10px rgba(29,46,80,.9);"></div></div>
<svg style="position:absolute;left:778px;top:199px" width="1328" height="1328" viewBox="778 199 1328 1328">
<defs><linearGradient id="bl" x1="0" y1="0" x2="0" y2="1"><stop offset="0" stop-color="#0096ff"/><stop offset=".5" stop-color="#0084fc"/><stop offset="1" stop-color="#0076f8"/></linearGradient>
<filter id="bs" x="-30%" y="-30%" width="160%" height="160%"><feGaussianBlur stdDeviation="21"/></filter>
<filter id="shb" x="-30%" y="-30%" width="160%" height="160%"><feGaussianBlur stdDeviation="40"/></filter>
<clipPath id="sqc"><path d="M1668.0 333.0 L1692.5 333.2 L1710.6 333.9 L1726.8 335.1 L1741.9 336.7 L1756.2 338.7 L1769.7 341.2 L1782.7 344.2 L1795.2 347.6 L1807.1 351.4 L1818.6 355.7 L1829.7 360.4 L1840.3 365.6 L1850.5 371.2 L1860.3 377.3 L1869.7 383.7 L1878.7 390.6 L1887.2 397.9 L1895.4 405.6 L1903.1 413.8 L1910.4 422.3 L1917.3 431.3 L1923.7 440.7 L1929.8 450.5 L1935.4 460.7 L1940.6 471.3 L1945.3 482.4 L1949.6 493.9 L1953.4 505.8 L1956.8 518.3 L1959.8 531.3 L1962.3 544.8 L1964.3 559.1 L1965.9 574.2 L1967.1 590.4 L1967.8 608.5 L1968.0 633.0 L1968.0 1077.0 L1967.8 1101.5 L1967.1 1119.6 L1965.9 1135.8 L1964.3 1150.9 L1962.3 1165.2 L1959.8 1178.7 L1956.8 1191.7 L1953.4 1204.2 L1949.6 1216.1 L1945.3 1227.6 L1940.6 1238.7 L1935.4 1249.3 L1929.8 1259.5 L1923.7 1269.3 L1917.3 1278.7 L1910.4 1287.7 L1903.1 1296.2 L1895.4 1304.4 L1887.2 1312.1 L1878.7 1319.4 L1869.7 1326.3 L1860.3 1332.7 L1850.5 1338.8 L1840.3 1344.4 L1829.7 1349.6 L1818.6 1354.3 L1807.1 1358.6 L1795.2 1362.4 L1782.7 1365.8 L1769.7 1368.8 L1756.2 1371.3 L1741.9 1373.3 L1726.8 1374.9 L1710.6 1376.1 L1692.5 1376.8 L1668.0 1377.0 L1196.0 1377.0 L1173.8 1376.8 L1157.4 1376.3 L1142.7 1375.5 L1129.0 1374.3 L1116.0 1372.7 L1103.8 1370.9 L1092.0 1368.7 L1080.7 1366.1 L1069.9 1363.3 L1059.4 1360.0 L1049.4 1356.5 L1039.8 1352.7 L1030.5 1348.5 L1021.6 1344.0 L1013.1 1339.1 L1005.0 1334.0 L997.2 1328.5 L989.9 1322.8 L982.9 1316.7 L976.2 1310.3 L970.0 1303.6 L964.1 1296.6 L958.6 1289.3 L953.6 1281.7 L948.9 1273.7 L944.6 1265.5 L940.7 1256.9 L937.2 1247.9 L934.1 1238.7 L931.4 1229.0 L929.2 1218.8 L927.3 1208.2 L925.9 1196.9 L924.8 1184.8 L924.2 1171.3 L924.0 1153.0 L924.0 633.0 L924.2 608.5 L924.9 590.4 L926.1 574.2 L927.7 559.1 L929.7 544.8 L932.2 531.3 L935.2 518.3 L938.6 505.8 L942.4 493.9 L946.7 482.4 L951.4 471.3 L956.6 460.7 L962.2 450.5 L968.3 440.7 L974.7 431.3 L981.6 422.3 L988.9 413.8 L996.6 405.6 L1004.8 397.9 L1013.3 390.6 L1022.3 383.7 L1031.7 377.3 L1041.5 371.2 L1051.7 365.6 L1062.3 360.4 L1073.4 355.7 L1084.9 351.4 L1096.8 347.6 L1109.3 344.2 L1122.3 341.2 L1135.8 338.7 L1150.1 336.7 L1165.2 335.1 L1181.4 333.9 L1199.5 333.2 L1224.0 333.0Z"/></clipPath></defs>
<path d="M1668.0 333.0 L1692.5 333.2 L1710.6 333.9 L1726.8 335.1 L1741.9 336.7 L1756.2 338.7 L1769.7 341.2 L1782.7 344.2 L1795.2 347.6 L1807.1 351.4 L1818.6 355.7 L1829.7 360.4 L1840.3 365.6 L1850.5 371.2 L1860.3 377.3 L1869.7 383.7 L1878.7 390.6 L1887.2 397.9 L1895.4 405.6 L1903.1 413.8 L1910.4 422.3 L1917.3 431.3 L1923.7 440.7 L1929.8 450.5 L1935.4 460.7 L1940.6 471.3 L1945.3 482.4 L1949.6 493.9 L1953.4 505.8 L1956.8 518.3 L1959.8 531.3 L1962.3 544.8 L1964.3 559.1 L1965.9 574.2 L1967.1 590.4 L1967.8 608.5 L1968.0 633.0 L1968.0 1077.0 L1967.8 1101.5 L1967.1 1119.6 L1965.9 1135.8 L1964.3 1150.9 L1962.3 1165.2 L1959.8 1178.7 L1956.8 1191.7 L1953.4 1204.2 L1949.6 1216.1 L1945.3 1227.6 L1940.6 1238.7 L1935.4 1249.3 L1929.8 1259.5 L1923.7 1269.3 L1917.3 1278.7 L1910.4 1287.7 L1903.1 1296.2 L1895.4 1304.4 L1887.2 1312.1 L1878.7 1319.4 L1869.7 1326.3 L1860.3 1332.7 L1850.5 1338.8 L1840.3 1344.4 L1829.7 1349.6 L1818.6 1354.3 L1807.1 1358.6 L1795.2 1362.4 L1782.7 1365.8 L1769.7 1368.8 L1756.2 1371.3 L1741.9 1373.3 L1726.8 1374.9 L1710.6 1376.1 L1692.5 1376.8 L1668.0 1377.0 L1196.0 1377.0 L1173.8 1376.8 L1157.4 1376.3 L1142.7 1375.5 L1129.0 1374.3 L1116.0 1372.7 L1103.8 1370.9 L1092.0 1368.7 L1080.7 1366.1 L1069.9 1363.3 L1059.4 1360.0 L1049.4 1356.5 L1039.8 1352.7 L1030.5 1348.5 L1021.6 1344.0 L1013.1 1339.1 L1005.0 1334.0 L997.2 1328.5 L989.9 1322.8 L982.9 1316.7 L976.2 1310.3 L970.0 1303.6 L964.1 1296.6 L958.6 1289.3 L953.6 1281.7 L948.9 1273.7 L944.6 1265.5 L940.7 1256.9 L937.2 1247.9 L934.1 1238.7 L931.4 1229.0 L929.2 1218.8 L927.3 1208.2 L925.9 1196.9 L924.8 1184.8 L924.2 1171.3 L924.0 1153.0 L924.0 633.0 L924.2 608.5 L924.9 590.4 L926.1 574.2 L927.7 559.1 L929.7 544.8 L932.2 531.3 L935.2 518.3 L938.6 505.8 L942.4 493.9 L946.7 482.4 L951.4 471.3 L956.6 460.7 L962.2 450.5 L968.3 440.7 L974.7 431.3 L981.6 422.3 L988.9 413.8 L996.6 405.6 L1004.8 397.9 L1013.3 390.6 L1022.3 383.7 L1031.7 377.3 L1041.5 371.2 L1051.7 365.6 L1062.3 360.4 L1073.4 355.7 L1084.9 351.4 L1096.8 347.6 L1109.3 344.2 L1122.3 341.2 L1135.8 338.7 L1150.1 336.7 L1165.2 335.1 L1181.4 333.9 L1199.5 333.2 L1224.0 333.0Z" fill="url(#bl)"/>
<g clip-path="url(#sqc)">
<g filter="url(#bs)" fill="#0038a8" stroke="#0038a8" stroke-width="8" stroke-linejoin="round" opacity=".8" font-family="Liberation Sans, sans-serif" font-weight="bold" font-size="460">
<text transform="translate(1174.8 1012) scale(.965 1)" x="0" y="0">&#123;</text>
<text transform="translate(1536.1 1012) scale(.965 1)" x="0" y="0">&#125;</text>
</g>
<g fill="#fff" stroke="#fff" stroke-width="8" stroke-linejoin="round" font-family="Liberation Sans, sans-serif" font-weight="bold" font-size="460">
<text transform="translate(1174.8 982) scale(.965 1)" x="0" y="0">&#123;</text>
<text transform="translate(1536.1 982) scale(.965 1)" x="0" y="0">&#125;</text>
</g></g>
</svg>
<svg style="position:absolute;left:778px;top:199px" width="1328" height="1328" shape-rendering="crispEdges" fill="none">
<rect x=".5" y=".5" width="1327" height="1327" stroke="#111"/><rect x=".5" y=".5" width="1327" height="1327" stroke="#f0f000" stroke-dasharray="4 4"/></svg>
<div style="left:2433px;top:168px;width:14px;height:1392px;background:#5a5a5a;border:1px solid #2f2f2f;border-radius:2px;"></div>
<div style="left:452px;top:1561px;width:1983px;height:14px;background:#5a5a5a;border:1px solid #2f2f2f;border-radius:2px;"></div>
<svg style="position:absolute;left:437px;top:1563px;" width="11" height="11" viewBox="0 0 11 11"><rect x=".5" y=".5" width="10" height="10" fill="#5f5f5f" stroke="#9a9a9a" stroke-dasharray="1 1"/></svg>
<svg style="position:absolute;left:2436px;top:1561px;" width="14" height="14" viewBox="0 0 14 14"><path d="M7 0.5 L13.5 13.5 L7 9 L0.5 13.5 Z" fill="#cfcfcf"/></svg>
<svg style="position:absolute;left:2434px;top:147px;" width="13" height="13" viewBox="0 0 13 13"><rect x=".5" y=".5" width="12" height="12" fill="#3a3a3a" stroke="#5a5a5a"/><circle cx="5.5" cy="5.5" r="3" fill="none" stroke="#bbb" stroke-width="1.5"/><path d="M8 8 L11 11" stroke="#bbb" stroke-width="1.8"/></svg>
<div style="left:565.3px;top:1579.5px;width:64.2px;height:34px;background:#2b2b2b;border:1px solid #1c1c1c;border-radius:3px;"></div>
<span class="t" style="left:572.50px;top:1589.41px;font-size:17px;line-height:17px;color:#dcdcdc;letter-spacing:-0.977px;">px</span>
<svg style="position:absolute;left:606px;top:1591px;" width="12" height="8" viewBox="0 0 12 8"><path d="M1 1.5 L6 6.5 L11 1.5" fill="none" stroke="#e0e0e0" stroke-width="1.6"/></svg>
<div style="left:629.5px;top:1579.5px;width:45.5px;height:34px;background:#3a3a3a;"></div>
<div style="left:632.6px;top:1586.6px;width:40.4px;height:18.6px;background:#1f1f1f;"></div>
<span class="t" style="left:633.80px;top:1590.26px;font-size:16px;line-height:16px;color:#dcdcdc;letter-spacing:-1.313px;">100 %</span>
<div style="left:675.5px;top:1579.5px;width:25.5px;height:34px;background:#2b2b2b;border:1px solid #1c1c1c;border-radius:3px;"></div>
<svg style="position:absolute;left:682px;top:1591px;" width="12" height="8" viewBox="0 0 12 8"><path d="M1 1.5 L6 6.5 L11 1.5" fill="none" stroke="#e0e0e0" stroke-width="1.6"/></svg>
<span class="t" style="left:703.30px;top:1589.61px;font-size:17px;line-height:17px;color:#dcdcdc;letter-spacing:0.348px;">icon-512.png (16.4 MB)</span>
<div style="left:0px;top:1616px;width:2844px;height:2px;background:#131313;"></div>
<div style="left:2447px;top:86px;width:6px;height:1530px;background:#3f3f3f;"></div>
<div style="left:2449.5px;top:86px;width:1px;height:1530px;background:#555;"></div>
<div style="left:2534.8px;top:89px;width:217.5px;height:22.7px;background:#2b2b2b;"></div>
<div style="left:2617.5px;top:89px;width:1px;height:22.7px;background:#3d3d3d;"></div>
<div style="left:2680px;top:89px;width:1px;height:22.7px;background:#3d3d3d;"></div>
<div style="left:2453px;top:112px;width:381px;height:678px;background:#454545;border:1px solid #555;"></div>
<div style="left:2453px;top:86.5px;width:82.3px;height:27px;background:#454545;border:1px solid #555;border-bottom:none;"></div>
<div style="left:2456.3px;top:92.3px;width:14.3px;height:14.3px;background:#fff;border:1px solid #111;"></div>
<div style="left:2457.5px;top:93.3px;width:12px;height:12.3px;background:#000;border-radius:50%;"></div>
<span class="t" style="left:2473.20px;top:91.61px;font-size:17px;line-height:17px;color:#e2e2e2;letter-spacing:-0.737px;">Brushes</span>
<div style="left:2536.4px;top:92.8px;width:14px;height:14px;background:#ffb347;border:1px solid #222;"></div>
<span class="t" style="left:2553.40px;top:92.41px;font-size:17px;line-height:17px;color:#e2e2e2;letter-spacing:-0.288px;">Patterns</span>
<div style="left:2620px;top:92.8px;width:14.3px;height:14px;background:#fff;border:1px solid #222;"></div>
<span class="t" style="left:2622.00px;top:96.30px;font-size:8.5px;line-height:8.5px;color:#111;letter-spacing:-0.198px;">Aa</span>
<span class="t" style="left:2637.50px;top:92.41px;font-size:17px;line-height:17px;color:#e2e2e2;letter-spacing:-0.763px;">Fonts</span>
<svg style="position:absolute;left:2681.7px;top:95px;" width="13.5" height="10" viewBox="0 0 13.5 10"><rect x=".5" y=".5" width="12.5" height="9" fill="#fff" stroke="#222"/><path d="M1.5 1.5 L11.5 8.5 H1.5 Z" fill="#f2e24a"/></svg>
<span class="t" style="left:2697.20px;top:92.41px;font-size:17px;line-height:17px;color:#e2e2e2;letter-spacing:-0.284px;">History</span>
<svg style="position:absolute;left:2817.6px;top:94px;" width="11" height="10" viewBox="0 0 11 10"><rect x=".5" y=".5" width="10" height="9" fill="none" stroke="#b5b5b5"/><path d="M8 2 V8 L3 5 Z" fill="#b5b5b5"/></svg>
<div style="left:2457.5px;top:117px;width:372px;height:25px;background:#202020;border:1px solid #333;"></div>
<span class="t" style="left:2461.30px;top:121.61px;font-size:17px;line-height:17px;color:#707070;letter-spacing:0.314px;font-style:italic;">filter</span>
<svg style="position:absolute;left:2816px;top:126px;" width="9" height="7" viewBox="0 0 9 7"><path d="M.8 1 L4.5 5 L8.2 1" fill="none" stroke="#e6e6e6" stroke-width="1.5"/></svg>
<span class="t" style="left:2457.40px;top:147.81px;font-size:17px;line-height:17px;color:#e0e0e0;letter-spacing:-0.147px;font-style:italic;">2. Hardness 100 (51 × 51)</span>
<div style="left:2816.5px;top:167.5px;width:14px;height:535px;background:#5a5a5a;border:1px solid #333;border-radius:2px;"></div>
<div style="left:2456px;top:702px;width:374px;height:1px;background:#333;"></div>
<svg style="position:absolute;left:2457px;top:167.7px;" width="340" height="204" viewBox="0 0 340 204"><defs>
<radialGradient id="rg"><stop offset="0" stop-color="#000"/><stop offset=".55" stop-color="#000" stop-opacity=".85"/><stop offset="1" stop-color="#000" stop-opacity="0"/></radialGradient>
<radialGradient id="rg2"><stop offset="0" stop-color="#000"/><stop offset=".25" stop-color="#000" stop-opacity=".8"/><stop offset="1" stop-color="#000" stop-opacity="0"/></radialGradient>
<radialGradient id="rg3"><stop offset="0" stop-color="#000"/><stop offset=".45" stop-color="#000" stop-opacity=".9"/><stop offset="1" stop-color="#000" stop-opacity="0"/></radialGradient>
<radialGradient id="sun"><stop offset="0" stop-color="#fff7a0"/><stop offset=".3" stop-color="#ffe94a"/><stop offset=".6" stop-color="#ffb070"/><stop offset="1" stop-color="#ff9070" stop-opacity="0"/></radialGradient>
<filter id="ro" x="-20%" y="-20%" width="140%" height="140%"><feTurbulence type="fractalNoise" baseFrequency=".3" numOctaves="2" seed="4"/><feDisplacementMap in="SourceGraphic" scale="8"/></filter>
<filter id="b1"><feGaussianBlur stdDeviation="1"/></filter><filter id="b05"><feGaussianBlur stdDeviation=".6"/></filter>
<filter id="sp" x="-10%" y="-10%" width="120%" height="120%"><feTurbulence type="fractalNoise" baseFrequency=".5" numOctaves="2" seed="3"/><feColorMatrix type="matrix" values="0 0 0 0 0 0 0 0 0 0 0 0 0 0 0 0 0 0 -10 5"/><feComposite in="SourceGraphic" operator="in"/></filter>
<filter id="sp2" x="-10%" y="-10%" width="120%" height="120%"><feTurbulence type="fractalNoise" baseFrequency=".45" numOctaves="2" seed="11"/><feColorMatrix type="matrix" values="0 0 0 0 0 0 0 0 0 0 0 0 0 0 0 0 0 0 -9 5.3"/><feComposite in="SourceGraphic" operator="in"/></filter>
<filter id="sp3" x="-10%" y="-10%" width="120%" height="120%"><feTurbulence type="fractalNoise" baseFrequency=".8" numOctaves="1" seed="5"/><feColorMatrix type="matrix" values="0 0 0 0 0 0 0 0 0 0 0 0 0 0 0 0 0 0 -14 7.2"/><feComposite in="SourceGraphic" operator="in"/></filter>
<filter id="sp4" x="-10%" y="-10%" width="120%" height="120%"><feTurbulence type="fractalNoise" baseFrequency=".16" numOctaves="3" seed="8"/><feColorMatrix type="matrix" values="0 0 0 0 0 0 0 0 0 0 0 0 0 0 0 0 0 0 -5 3.1"/><feComposite in="SourceGraphic" operator="in"/></filter>
</defs><path d="M0 0 H340 V170 H272 V204 H0 Z" fill="#fff"/><g transform="translate(0 0)"></g><g transform="translate(34 0)"></g><g transform="translate(68 0)"><rect x="16" y="16" width="2.4" height="2.4" fill="#000"/><path d="M26 32.5 L31 27.5 V32.5 Z" fill="#7d8cff"/></g><g transform="translate(102 0)"><rect x="3" y="13.5" width="29" height="6.6" fill="#000"/><rect x="28.5" y="28.5" width="5" height="5" fill="#8c9cff"/><path d="M28 30.8 H33.5 M30.7 28 V33.6" stroke="#000" stroke-width="1"/></g><g transform="translate(136 0)"><ellipse cx="17" cy="17" rx="12.5" ry="3.6" fill="#000" filter="url(#b1)"/><rect x="28.5" y="28.5" width="5" height="5" fill="#8c9cff"/><path d="M28 30.8 H33.5 M30.7 28 V33.6" stroke="#000" stroke-width="1"/></g><g transform="translate(170 0)"><rect x="3" y="16.6" width="29" height="1" fill="#000"/><rect x="28.5" y="28.5" width="5" height="5" fill="#8c9cff"/><path d="M28 30.8 H33.5 M30.7 28 V33.6" stroke="#000" stroke-width="1"/></g><g transform="translate(204 0)"><circle cx="17" cy="17.5" r="10" fill="url(#rg2)"/><rect x="28.5" y="28.5" width="5" height="5" fill="#8c9cff"/><path d="M28 30.8 H33.5 M30.7 28 V33.6" stroke="#000" stroke-width="1"/></g><g transform="translate(238 0)"><circle cx="17" cy="17.5" r="13" fill="url(#rg2)"/><rect x="28.5" y="28.5" width="5" height="5" fill="#8c9cff"/><path d="M28 30.8 H33.5 M30.7 28 V33.6" stroke="#000" stroke-width="1"/></g><g transform="translate(272 0)"><circle cx="17" cy="17.5" r="15" fill="url(#rg3)"/><rect x="28.5" y="28.5" width="5" height="5" fill="#8c9cff"/><path d="M28 30.8 H33.5 M30.7 28 V33.6" stroke="#000" stroke-width="1"/></g><g transform="translate(306 0)"><rect x=".5" y=".5" width="33" height="33" fill="#fff" stroke="#000"/><circle cx="17" cy="17" r="15.3" fill="#000"/><rect x="28.5" y="28.5" width="5" height="5" fill="#8c9cff"/><path d="M28 30.8 H33.5 M30.7 28 V33.6" stroke="#000" stroke-width="1"/></g><g transform="translate(0 34)"><path d="M9.5 8 L18 13 L26 8.5 L24.5 18 L31 23.5 L21.5 24.5 L17.5 33 L13.5 24.5 L4 23.5 L11 18 Z" fill="#000"/><rect x="28.5" y="28.5" width="5" height="5" fill="#8c9cff"/><path d="M28 30.8 H33.5 M30.7 28 V33.6" stroke="#000" stroke-width="1"/></g><g transform="translate(34 34)"><ellipse cx="17" cy="17" rx="12" ry="12" fill="url(#rg)" opacity="1" filter="url(#sp2)"/><circle cx="18" cy="18" r="6.5" fill="#000" filter="url(#ro)"/><rect x="28.5" y="28.5" width="5" height="5" fill="#ff8a8a"/><path d="M28 30.8 H33.5 M30.7 28 V33.6" stroke="#000" stroke-width="1"/></g><g transform="translate(68 34)"><ellipse cx="17" cy="17" rx="12" ry="9" fill="url(#rg)" opacity="0.9" filter="url(#sp)"/><rect x="28.5" y="28.5" width="5" height="5" fill="#ff8a8a"/><path d="M28 30.8 H33.5 M30.7 28 V33.6" stroke="#000" stroke-width="1"/></g><g transform="translate(102 34)"><ellipse cx="17" cy="17" rx="8" ry="12" fill="url(#rg)" opacity="0.85" filter="url(#sp)"/><rect x="28.5" y="28.5" width="5" height="5" fill="#ff8a8a"/><path d="M28 30.8 H33.5 M30.7 28 V33.6" stroke="#000" stroke-width="1"/></g><g transform="translate(136 34)"><circle cx="17" cy="17" r="12" fill="url(#rg2)" opacity=".75"/><ellipse cx="17" cy="17" rx="11" ry="11" fill="url(#rg)" opacity="0.35" filter="url(#sp2)"/><rect x="28.5" y="28.5" width="5" height="5" fill="#ff8a8a"/><path d="M28 30.8 H33.5 M30.7 28 V33.6" stroke="#000" stroke-width="1"/></g><g transform="translate(170 34)"><ellipse cx="17" cy="17" rx="13.5" ry="13.5" fill="url(#rg)" opacity="1" filter="url(#sp2)"/><circle cx="18" cy="19" r="7.5" fill="#000" filter="url(#ro)"/><rect x="28.5" y="28.5" width="5" height="5" fill="#ff8a8a"/><path d="M28 30.8 H33.5 M30.7 28 V33.6" stroke="#000" stroke-width="1"/></g><g transform="translate(204 34)"><path d="M6 3 L9 9" stroke="#999" stroke-width="1.2"/><path d="M26 32.5 L31 27.5 V32.5 Z" fill="#ff7d7d"/></g><g transform="translate(238 34)"><circle cx="12.4" cy="7.9" r="1.0" fill="#000"/><circle cx="5.9" cy="17.9" r="0.7" fill="#000"/><circle cx="5.5" cy="17.2" r="0.4" fill="#000"/><circle cx="15.3" cy="5.8" r="0.5" fill="#000"/><circle cx="15.0" cy="25.5" r="0.5" fill="#000"/><circle cx="9.8" cy="20.3" r="1.3" fill="#000"/><circle cx="19.0" cy="14.3" r="1.3" fill="#000"/><circle cx="5.2" cy="26.3" r="0.7" fill="#000"/><circle cx="7.8" cy="7.1" r="0.7" fill="#000"/><circle cx="25.2" cy="8.7" r="0.9" fill="#000"/><circle cx="20.6" cy="13.7" r="0.9" fill="#000"/><circle cx="5.6" cy="5.5" r="0.6" fill="#000"/><circle cx="21.7" cy="15.1" r="0.7" fill="#000"/><circle cx="19.2" cy="15.8" r="0.7" fill="#000"/><path d="M28 30.8 H33.5 M30.7 28 V33.6" stroke="#000" stroke-width="1"/></g><g transform="translate(272 34)"><circle cx="23.5" cy="21.4" r="0.9" fill="#000"/><circle cx="18.6" cy="17.6" r="1.6" fill="#000"/><circle cx="22.0" cy="12.3" r="1.7" fill="#000"/><circle cx="8.6" cy="15.2" r="1.4" fill="#000"/><circle cx="9.3" cy="16.8" r="0.6" fill="#000"/><circle cx="20.7" cy="22.8" r="1.2" fill="#000"/><circle cx="25.3" cy="12.9" r="1.4" fill="#000"/><circle cx="19.1" cy="18.8" r="1.1" fill="#000"/><circle cx="24.5" cy="26.8" r="1.1" fill="#000"/><circle cx="20.6" cy="7.3" r="1.4" fill="#000"/><circle cx="20.2" cy="27.8" r="1.5" fill="#000"/><circle cx="12.3" cy="14.5" r="1.3" fill="#000"/><circle cx="6.5" cy="16.2" r="0.8" fill="#000"/><circle cx="8.6" cy="7.3" r="1.4" fill="#000"/><circle cx="8.8" cy="11.4" r="1.0" fill="#000"/><circle cx="25.2" cy="7.8" r="1.1" fill="#000"/><circle cx="18.1" cy="25.4" r="1.5" fill="#000"/><circle cx="25.0" cy="12.1" r="1.1" fill="#000"/><circle cx="13.9" cy="25.5" r="1.7" fill="#000"/><circle cx="9.3" cy="9.9" r="0.9" fill="#000"/><circle cx="11.1" cy="16.7" r="1.2" fill="#000"/><circle cx="11.8" cy="6.1" r="1.1" fill="#000"/><path d="M28 30.8 H33.5 M30.7 28 V33.6" stroke="#000" stroke-width="1"/></g><g transform="translate(306 34)"><circle cx="13.6" cy="18.7" r="0.5" fill="#000"/><circle cx="22.0" cy="17.4" r="0.5" fill="#000"/><circle cx="21.6" cy="5.4" r="0.5" fill="#000"/><circle cx="24.3" cy="26.7" r="0.5" fill="#000"/><circle cx="14.2" cy="14.4" r="0.3" fill="#000"/><circle cx="20.5" cy="5.6" r="0.3" fill="#000"/><circle cx="9.4" cy="8.2" r="0.4" fill="#000"/><circle cx="5.4" cy="4.0" r="0.3" fill="#000"/><circle cx="6.6" cy="13.5" r="0.3" fill="#000"/><circle cx="26.7" cy="20.0" r="0.3" fill="#000"/><circle cx="10.6" cy="13.0" r="0.4" fill="#000"/><circle cx="7.2" cy="26.1" r="0.5" fill="#000"/><circle cx="16.1" cy="16.6" r="0.3" fill="#000"/><circle cx="6.7" cy="12.9" r="0.4" fill="#000"/><circle cx="25.6" cy="8.2" r="0.3" fill="#000"/><circle cx="28.7" cy="17.7" r="0.3" fill="#000"/><circle cx="18.1" cy="4.7" r="0.4" fill="#000"/><circle cx="29.4" cy="26.4" r="0.5" fill="#000"/><circle cx="10.8" cy="13.5" r="0.3" fill="#000"/><circle cx="24.1" cy="17.8" r="0.5" fill="#000"/><circle cx="12.6" cy="9.8" r="0.5" fill="#000"/><circle cx="29.6" cy="26.2" r="0.5" fill="#000"/><circle cx="25.3" cy="23.2" r="0.4" fill="#000"/><circle cx="17.5" cy="13.2" r="0.3" fill="#000"/><circle cx="4.7" cy="11.3" r="0.4" fill="#000"/><circle cx="22.0" cy="28.9" r="0.4" fill="#000"/><circle cx="28.4" cy="29.7" r="0.5" fill="#000"/><circle cx="13.5" cy="9.7" r="0.4" fill="#000"/><circle cx="9.1" cy="9.3" r="0.5" fill="#000"/><circle cx="27.4" cy="25.9" r="0.4" fill="#000"/></g><g transform="translate(0 68)"><ellipse cx="17" cy="17" rx="13" ry="13" fill="url(#rg)" opacity="0.8" filter="url(#sp)"/><path d="M28 30.8 H33.5 M30.7 28 V33.6" stroke="#000" stroke-width="1"/></g><g transform="translate(34 68)"><circle cx="17" cy="17" r="13.5" fill="#222"/><circle cx="14.8" cy="5.3" r="1.9" fill="#fff" stroke="#000" stroke-width="1"/><circle cx="19.2" cy="5.3" r="1.9" fill="#fff" stroke="#000" stroke-width="1"/><circle cx="8.2" cy="9.2" r="1.9" fill="#fff" stroke="#000" stroke-width="1"/><circle cx="12.6" cy="9.2" r="1.9" fill="#fff" stroke="#000" stroke-width="1"/><circle cx="17.0" cy="9.2" r="1.9" fill="#fff" stroke="#000" stroke-width="1"/><circle cx="21.4" cy="9.2" r="1.9" fill="#fff" stroke="#000" stroke-width="1"/><circle cx="25.8" cy="9.2" r="1.9" fill="#fff" stroke="#000" stroke-width="1"/><circle cx="6.0" cy="13.1" r="1.9" fill="#fff" stroke="#000" stroke-width="1"/><circle cx="10.4" cy="13.1" r="1.9" fill="#fff" stroke="#000" stroke-width="1"/><circle cx="14.8" cy="13.1" r="1.9" fill="#fff" stroke="#000" stroke-width="1"/><circle cx="19.2" cy="13.1" r="1.9" fill="#fff" stroke="#000" stroke-width="1"/><circle cx="23.6" cy="13.1" r="1.9" fill="#fff" stroke="#000" stroke-width="1"/><circle cx="28.0" cy="13.1" r="1.9" fill="#fff" stroke="#000" stroke-width="1"/><circle cx="8.2" cy="17.0" r="1.9" fill="#fff" stroke="#000" stroke-width="1"/><circle cx="12.6" cy="17.0" r="1.9" fill="#fff" stroke="#000" stroke-width="1"/><circle cx="17.0" cy="17.0" r="1.9" fill="#fff" stroke="#000" stroke-width="1"/><circle cx="21.4" cy="17.0" r="1.9" fill="#fff" stroke="#000" stroke-width="1"/><circle cx="25.8" cy="17.0" r="1.9" fill="#fff" stroke="#000" stroke-width="1"/><circle cx="6.0" cy="20.9" r="1.9" fill="#fff" stroke="#000" stroke-width="1"/><circle cx="10.4" cy="20.9" r="1.9" fill="#fff" stroke="#000" stroke-width="1"/><circle cx="14.8" cy="20.9" r="1.9" fill="#fff" stroke="#000" stroke-width="1"/><circle cx="19.2" cy="20.9" r="1.9" fill="#fff" stroke="#000" stroke-width="1"/><circle cx="23.6" cy="20.9" r="1.9" fill="#fff" stroke="#000" stroke-width="1"/><circle cx="28.0" cy="20.9" r="1.9" fill="#fff" stroke="#000" stroke-width="1"/><circle cx="8.2" cy="24.8" r="1.9" fill="#fff" stroke="#000" stroke-width="1"/><circle cx="12.6" cy="24.8" r="1.9" fill="#fff" stroke="#000" stroke-width="1"/><circle cx="17.0" cy="24.8" r="1.9" fill="#fff" stroke="#000" stroke-width="1"/><circle cx="21.4" cy="24.8" r="1.9" fill="#fff" stroke="#000" stroke-width="1"/><circle cx="25.8" cy="24.8" r="1.9" fill="#fff" stroke="#000" stroke-width="1"/><circle cx="14.8" cy="28.7" r="1.9" fill="#fff" stroke="#000" stroke-width="1"/><circle cx="19.2" cy="28.7" r="1.9" fill="#fff" stroke="#000" stroke-width="1"/><path d="M28 30.8 H33.5 M30.7 28 V33.6" stroke="#000" stroke-width="1"/></g><g transform="translate(68 68)"><ellipse cx="17" cy="17" rx="14" ry="14" fill="url(#rg)" opacity="0.95" filter="url(#sp)"/><rect x="28.5" y="28.5" width="5" height="5" fill="#ff8a8a"/><path d="M28 30.8 H33.5 M30.7 28 V33.6" stroke="#000" stroke-width="1"/></g><g transform="translate(102 68)"><ellipse cx="17" cy="17" rx="14.5" ry="14.5" fill="#000" opacity="1" filter="url(#sp3)"/><rect x="28.5" y="28.5" width="5" height="5" fill="#ff8a8a"/><path d="M28 30.8 H33.5 M30.7 28 V33.6" stroke="#000" stroke-width="1"/></g><g transform="translate(136 68)"><circle cx="17" cy="17" r="13.5" fill="#000"/><ellipse cx="13" cy="22" rx="9" ry="7" fill="#fff" opacity=".8" filter="url(#sp)"/><rect x="28.5" y="28.5" width="5" height="5" fill="#ff8a8a"/><path d="M28 30.8 H33.5 M30.7 28 V33.6" stroke="#000" stroke-width="1"/></g><g transform="translate(170 68)"><ellipse cx="17" cy="17" rx="13" ry="8" fill="#000" opacity="1" filter="url(#sp3)"/><path d="M28 30.8 H33.5 M30.7 28 V33.6" stroke="#000" stroke-width="1"/></g><g transform="translate(204 68)"><rect x="3" y="9" width="24" height="14" fill="#000" opacity=".8" filter="url(#sp3)"/><path d="M28 30.8 H33.5 M30.7 28 V33.6" stroke="#000" stroke-width="1"/></g><g transform="translate(238 68)"><rect x="12" y="3" width="7" height="27" fill="#000" opacity=".35" filter="url(#sp)"/><rect x="28.5" y="28.5" width="5" height="5" fill="#ff8a8a"/><path d="M28 30.8 H33.5 M30.7 28 V33.6" stroke="#000" stroke-width="1"/></g><g transform="translate(272 68)"><g stroke="#888" stroke-width="1.6" stroke-linecap="round"><path d="M6 4 L9 11 M15 7 L11 12 M17 10 L22 9 M4 14 L6 10 M10 15 L19 14 M26 13 L27 17 M9 21 L14 24 M8 26 L13 23 M18 22 L19 26"/></g></g><g transform="translate(306 68)"><path d="M4 8 L8 13 L6 18 L9 20 L12 14 L24 15 L29 12 L30 22 L26 20 L22 24 L16 20 L8 24 L5 21 M8 5 L8 12" fill="none" stroke="#9a9a9a" stroke-width="1.2"/><rect x="28.5" y="28.5" width="5" height="5" fill="#ff8a8a"/><path d="M28 30.8 H33.5 M30.7 28 V33.6" stroke="#000" stroke-width="1"/></g><g transform="translate(0 102)"><ellipse cx="17" cy="17" rx="15.5" ry="15.5" fill="#000" opacity="0.55" filter="url(#sp3)"/><rect x="28.5" y="28.5" width="5" height="5" fill="#ff8a8a"/><path d="M28 30.8 H33.5 M30.7 28 V33.6" stroke="#000" stroke-width="1"/></g><g transform="translate(34 102)"><ellipse cx="17" cy="17" rx="13" ry="13" fill="url(#rg)" opacity="1" filter="url(#sp2)"/><circle cx="17" cy="19" r="7" fill="#000" filter="url(#ro)"/><rect x="28.5" y="28.5" width="5" height="5" fill="#ff8a8a"/><path d="M28 30.8 H33.5 M30.7 28 V33.6" stroke="#000" stroke-width="1"/></g><g transform="translate(68 102)"><g stroke="#111" stroke-width="1.1"><path d="M5 6 H30 M6 9.5 H29 M5 13.5 H31 M6 17 H32 M7 21 H30 M6 24.5 H29 M5 28 H31"/></g><path d="M28 30.8 H33.5 M30.7 28 V33.6" stroke="#000" stroke-width="1"/></g><g transform="translate(102 102)"><circle cx="17" cy="17" r="12" fill="url(#rg)" opacity=".55"/><ellipse cx="17" cy="17" rx="12" ry="12" fill="url(#rg)" opacity="0.7" filter="url(#sp4)"/><path d="M28 30.8 H33.5 M30.7 28 V33.6" stroke="#000" stroke-width="1"/></g><g transform="translate(136 102)"><ellipse cx="17" cy="17" rx="14" ry="14" fill="url(#rg)" opacity="0.5" filter="url(#sp4)"/><path d="M28 30.8 H33.5 M30.7 28 V33.6" stroke="#000" stroke-width="1"/></g><g transform="translate(170 102)"><ellipse cx="17" cy="17" rx="12" ry="12" fill="url(#rg)" opacity="0.25" filter="url(#sp)"/><path d="M28 30.8 H33.5 M30.7 28 V33.6" stroke="#000" stroke-width="1"/></g><g transform="translate(204 102)"><ellipse cx="15" cy="18" rx="3.3" ry="8" fill="#000" opacity=".55" filter="url(#sp4)"/><rect x="28.5" y="28.5" width="5" height="5" fill="#ff8a8a"/><path d="M28 30.8 H33.5 M30.7 28 V33.6" stroke="#000" stroke-width="1"/></g><g transform="translate(238 102)"><path d="M16 8 L17 11 L15.5 14 L17.5 17 L16 20 L17 24" stroke="#000" stroke-width="2.4" stroke-dasharray="2.5 1.2" fill="none"/><rect x="28.5" y="28.5" width="5" height="5" fill="#ff8a8a"/><path d="M28 30.8 H33.5 M30.7 28 V33.6" stroke="#000" stroke-width="1"/></g><g transform="translate(272 102)"><ellipse cx="17" cy="16" rx="3.6" ry="11" fill="#000" filter="url(#b1)"/><path d="M26 32.5 L31 27.5 V32.5 Z" fill="#ff7d7d"/></g><g transform="translate(306 102)"><g stroke="#222" stroke-width="1.2"><path d="M4 15 L22 30 M6 11 L26 27 M9 8 L29 24 M13 6 L31 21"/></g><path d="M28 30.8 H33.5 M30.7 28 V33.6" stroke="#000" stroke-width="1"/></g><g transform="translate(0 136)"><rect x="16" y="16" width="1.2" height="1.2" fill="#000"/></g><g transform="translate(34 136)"><circle cx="17" cy="17" r="14" fill="url(#rg)" opacity=".5"/><path d="M28 30.8 H33.5 M30.7 28 V33.6" stroke="#000" stroke-width="1"/></g><g transform="translate(68 136)"><circle cx="17" cy="17" r="15" fill="url(#sun)"/><rect x="28.5" y="28.5" width="5" height="5" fill="#ff8a8a"/><path d="M28 30.8 H33.5 M30.7 28 V33.6" stroke="#000" stroke-width="1"/></g><g transform="translate(102 136)"><circle cx="20.7" cy="24.2" r="0.4" fill="#000"/><circle cx="20.9" cy="26.8" r="1.1" fill="#000"/><circle cx="23.0" cy="16.5" r="0.5" fill="#000"/><circle cx="23.9" cy="13.0" r="1.1" fill="#000"/><circle cx="28.3" cy="14.5" r="0.7" fill="#000"/><circle cx="27.7" cy="22.4" r="0.5" fill="#000"/><circle cx="8.0" cy="8.6" r="1.2" fill="#000"/><circle cx="24.4" cy="8.5" r="1.1" fill="#000"/><circle cx="28.5" cy="20.8" r="0.7" fill="#000"/><circle cx="18.2" cy="8.1" r="0.3" fill="#000"/><circle cx="28.3" cy="20.6" r="0.8" fill="#000"/><circle cx="27.4" cy="15.4" r="1.2" fill="#000"/><circle cx="24.8" cy="10.1" r="0.6" fill="#000"/><circle cx="12.0" cy="10.8" r="0.9" fill="#000"/><circle cx="11.2" cy="15.1" r="0.4" fill="#000"/><circle cx="26.8" cy="13.5" r="0.8" fill="#000"/><circle cx="19.0" cy="26.7" r="0.7" fill="#000"/><circle cx="27.0" cy="17.0" r="0.8" fill="#000"/><circle cx="17.6" cy="5.4" r="0.7" fill="#000"/><circle cx="9.4" cy="5.1" r="1.1" fill="#000"/><circle cx="9.1" cy="16.4" r="1.0" fill="#000"/><circle cx="18.4" cy="12.8" r="0.8" fill="#000"/><circle cx="18.3" cy="23.8" r="0.4" fill="#000"/><circle cx="18.4" cy="11.0" r="0.6" fill="#000"/><circle cx="23.5" cy="17.2" r="0.9" fill="#000"/><circle cx="23.2" cy="26.9" r="0.7" fill="#000"/><rect x="28.5" y="28.5" width="5" height="5" fill="#ff8a8a"/><path d="M28 30.8 H33.5 M30.7 28 V33.6" stroke="#000" stroke-width="1"/></g><g transform="translate(136 136)"><circle cx="19.5" cy="17.1" r="1.0" fill="#000"/><circle cx="21.2" cy="16.0" r="1.0" fill="#000"/><circle cx="16.5" cy="26.7" r="1.2" fill="#000"/><circle cx="25.3" cy="26.7" r="0.7" fill="#000"/><circle cx="18.3" cy="26.8" r="1.3" fill="#000"/><circle cx="9.0" cy="8.7" r="0.9" fill="#000"/><circle cx="7.6" cy="11.3" r="0.5" fill="#000"/><circle cx="20.7" cy="23.2" r="1.4" fill="#000"/><circle cx="9.4" cy="21.8" r="1.1" fill="#000"/><circle cx="9.1" cy="25.4" r="1.5" fill="#000"/><circle cx="10.8" cy="27.0" r="0.8" fill="#000"/><circle cx="16.7" cy="27.8" r="1.3" fill="#000"/><circle cx="9.6" cy="15.5" r="1.0" fill="#000"/><circle cx="13.5" cy="10.3" r="0.8" fill="#000"/><circle cx="21.9" cy="6.4" r="1.0" fill="#000"/><circle cx="15.7" cy="6.4" r="0.8" fill="#000"/><circle cx="19.7" cy="17.3" r="0.5" fill="#000"/><circle cx="27.7" cy="23.3" r="1.5" fill="#000"/><circle cx="8.3" cy="11.8" r="0.4" fill="#000"/><circle cx="23.1" cy="11.9" r="0.5" fill="#000"/><circle cx="15.3" cy="26.1" r="1.3" fill="#000"/><circle cx="11.7" cy="9.3" r="1.4" fill="#000"/><circle cx="18.6" cy="21.4" r="0.5" fill="#000"/><circle cx="7.3" cy="21.1" r="0.9" fill="#000"/><circle cx="7.6" cy="26.6" r="1.1" fill="#000"/><circle cx="23.6" cy="7.8" r="1.3" fill="#000"/><circle cx="7.5" cy="25.0" r="0.9" fill="#000"/><circle cx="13.5" cy="18.2" r="1.4" fill="#000"/><circle cx="11.9" cy="8.8" r="1.0" fill="#000"/><circle cx="11.2" cy="8.4" r="0.6" fill="#000"/><circle cx="7.1" cy="10.4" r="0.7" fill="#000"/><circle cx="12.7" cy="22.7" r="0.7" fill="#000"/><circle cx="17.0" cy="9.9" r="0.8" fill="#000"/><circle cx="6.4" cy="11.5" r="0.4" fill="#000"/><rect x="28.5" y="28.5" width="5" height="5" fill="#ff8a8a"/><path d="M28 30.8 H33.5 M30.7 28 V33.6" stroke="#000" stroke-width="1"/></g><g transform="translate(170 136)"><ellipse cx="17" cy="17" rx="15.5" ry="15.5" fill="#000" opacity="0.6" filter="url(#sp3)"/><path d="M28 30.8 H33.5 M30.7 28 V33.6" stroke="#000" stroke-width="1"/></g><g transform="translate(204 136)"><circle cx="17" cy="17" r="13" fill="url(#rg)" opacity=".3"/><ellipse cx="17" cy="17" rx="14.5" ry="14.5" fill="url(#rg)" opacity="0.6" filter="url(#sp)"/><path d="M28 30.8 H33.5 M30.7 28 V33.6" stroke="#000" stroke-width="1"/></g><g transform="translate(238 136)"><ellipse cx="17" cy="17" rx="12" ry="12" fill="url(#rg)" opacity="0.14" filter="url(#sp)"/><rect x="28.5" y="28.5" width="5" height="5" fill="#ff8a8a"/><path d="M28 30.8 H33.5 M30.7 28 V33.6" stroke="#000" stroke-width="1"/></g><g transform="translate(272 136)"><circle cx="17" cy="17" r="11" fill="url(#rg)" opacity=".45"/><ellipse cx="17" cy="17" rx="13" ry="13" fill="url(#rg)" opacity="0.5" filter="url(#sp4)"/><path d="M28 30.8 H33.5 M30.7 28 V33.6" stroke="#000" stroke-width="1"/></g><g transform="translate(306 136)"><circle cx="17" cy="17" r="10" fill="url(#rg)" opacity=".4"/><ellipse cx="17" cy="17" rx="12" ry="12" fill="url(#rg)" opacity="0.5" filter="url(#sp4)"/><path d="M28 30.8 H33.5 M30.7 28 V33.6" stroke="#000" stroke-width="1"/></g><g transform="translate(0 170)"><g stroke="#000" stroke-width="3.2" stroke-linecap="round" filter="url(#ro)"><path d="M8 8 L11 28 M14 5 L16 26 M20 9 L22 24 M6 14 L24 11 M9 22 L26 25"/></g><rect x="28.5" y="28.5" width="5" height="5" fill="#ff8a8a"/><path d="M28 30.8 H33.5 M30.7 28 V33.6" stroke="#000" stroke-width="1"/></g><g transform="translate(34 170)"><ellipse cx="17" cy="17" rx="12" ry="12" fill="url(#rg)" opacity="0.13" filter="url(#sp)"/><rect x="28.5" y="28.5" width="5" height="5" fill="#ff8a8a"/><path d="M28 30.8 H33.5 M30.7 28 V33.6" stroke="#000" stroke-width="1"/></g><g transform="translate(68 170)"><circle cx="17" cy="17" r="12" fill="#000" opacity=".4" filter="url(#ro)"/><ellipse cx="17" cy="17" rx="12.5" ry="12.5" fill="url(#rg)" opacity="0.3" filter="url(#sp4)"/><path d="M28 30.8 H33.5 M30.7 28 V33.6" stroke="#000" stroke-width="1"/></g><g transform="translate(102 170)"><path d="M17 3 L19 12 L28 6 L22 15 L31 19 L21 20 L24 30 L17 22 L9 30 L12 20 L3 18 L12 14 L7 5 L15 12 Z" fill="#555" opacity=".85" filter="url(#b05)"/><path d="M28 30.8 H33.5 M30.7 28 V33.6" stroke="#000" stroke-width="1"/></g><g transform="translate(136 170)"><circle cx="17" cy="18" r="12" fill="url(#rg)" opacity=".3"/><ellipse cx="17" cy="17" rx="14" ry="14" fill="url(#rg)" opacity="0.6" filter="url(#sp)"/><rect x="28.5" y="28.5" width="5" height="5" fill="#ff8a8a"/><path d="M28 30.8 H33.5 M30.7 28 V33.6" stroke="#000" stroke-width="1"/></g><g transform="translate(170 170)"><g fill="#5aa83a"><circle cx="6" cy="9" r="2.6"/><circle cx="12" cy="12" r="2.4"/><circle cx="17" cy="16" r="2.5"/><circle cx="22" cy="15" r="2.2"/><circle cx="24" cy="21" r="2.4"/><circle cx="20" cy="24" r="2"/></g><path d="M4 7 C10 14 18 14 26 22" stroke="#3d7a2a" fill="none"/><rect x="28.5" y="28.5" width="5" height="5" fill="#ff8a8a"/><path d="M28 30.8 H33.5 M30.7 28 V33.6" stroke="#000" stroke-width="1"/></g><g transform="translate(204 170)"><path d="M8 14 C8 8 14 6 17 8 L22 7 L27 1 L28 12 C28 20 22 24 14 22 C9 21 7 18 8 14 Z" fill="#7a6a55"/><ellipse cx="5.5" cy="14" rx="4" ry="3.2" fill="#111"/><circle cx="12.5" cy="11" r="3" fill="#fff"/><circle cx="19" cy="10.5" r="3.2" fill="#fff"/><circle cx="12.8" cy="11.5" r="1.2" fill="#000"/><circle cx="19" cy="11" r="1.3" fill="#000"/><path d="M20 20 L29 28" stroke="#c98a50" stroke-width="1.6"/><circle cx="29.5" cy="28.5" r="1.8" fill="#333"/><rect x="28.5" y="28.5" width="5" height="5" fill="#ff8a8a"/><path d="M28 30.8 H33.5 M30.7 28 V33.6" stroke="#000" stroke-width="1"/></g><g transform="translate(238 170)"><path d="M17 1 L17 6" stroke="#4a8a2f" stroke-width="2.5"/><path d="M6 9 C10 4 15 6 17 7 C20 5 26 5 29 10 C32 17 29 27 25 31 C20 33 12 33 8 31 C3 25 3 14 6 9 Z" fill="#7cbf55"/><path d="M12 9 C10 16 11 24 13 31 M22 9 C24 16 23 24 21 31" stroke="#5a9a3c" stroke-width="1.6" fill="none"/><path d="M8 29 C12 33 21 33 25 30" stroke="#b0643a" stroke-width="1.5" fill="none"/><path d="M9 11 C11 9 13 9 14 10" stroke="#d8f0c0" stroke-width="1.5" fill="none"/><path d="M28 30.8 H33.5 M30.7 28 V33.6" stroke="#000" stroke-width="1"/></g></svg>
<div style="left:2456.5px;top:707px;width:374px;height:25.5px;background:#202020;border:1px solid #333;"></div>
<span class="t" style="left:2459.50px;top:711.81px;font-size:17px;line-height:17px;color:#e0e0e0;letter-spacing:-0.549px;">Basic,</span>
<svg style="position:absolute;left:2815.5px;top:716px;" width="10" height="7" viewBox="0 0 10 7"><path d="M.8 1 L5 5.2 L9.2 1" fill="none" stroke="#e6e6e6" stroke-width="1.5"/></svg>
<div style="left:2456px;top:735.5px;width:374.5px;height:24.5px;background:#2e2e2e;border:1px solid #5a5a5a;"></div>
<div style="left:2457px;top:736.5px;width:13.5px;height:22.5px;background:#5a5a5a;"></div>
<div style="left:2470.5px;top:736.5px;width:1px;height:22.5px;background:#161616;"></div>
<span class="t" style="left:2458.00px;top:739.61px;font-size:17px;line-height:17px;color:#e6e6e6;letter-spacing:-0.704px;">Spacing</span>
<span class="t" style="left:2786.50px;top:739.61px;font-size:17px;line-height:17px;color:#e6e6e6;letter-spacing:-0.521px;">10.0</span>
<svg style="position:absolute;left:2819px;top:739px;" width="9" height="18" viewBox="0 0 9 18"><path d="M1 6 L4.5 2.5 L8 6 M1 12 L4.5 15.5 L8 12" fill="none" stroke="#ddd" stroke-width="1.4"/></svg>
<svg style="position:absolute;left:2479px;top:766px;" width="15" height="14" viewBox="0 0 15 14"><path d="M1 3 H7 M1 7 H5 M1 11.5 H9" stroke="#bdbdbd" stroke-width="1.6"/><path d="M12.5 1 L14.5 3 L7.5 10 L5 10.7 L5.7 8 Z" fill="#bdbdbd"/></svg>
<svg style="position:absolute;left:2542px;top:765px;" width="13" height="15" viewBox="0 0 13 15"><path d="M3.5 3.5 H11.5 V14 H2 V5 Z" fill="none" stroke="#bdbdbd" stroke-width="1.5"/><path d="M3.5 0 V5 M1 2.5 H6" stroke="#bdbdbd" stroke-width="1.3"/></svg>
<svg style="position:absolute;left:2604px;top:767px;" width="14" height="12" viewBox="0 0 14 12"><rect x=".8" y=".8" width="8" height="6.5" fill="none" stroke="#8a8a8a" stroke-width="1.4"/><rect x="5" y="4.5" width="8" height="6.5" fill="#454545" stroke="#8a8a8a" stroke-width="1.4"/></svg>
<svg style="position:absolute;left:2665.5px;top:765.5px;" width="14" height="14" viewBox="0 0 14 14"><rect x="1" y="1" width="12" height="12" fill="none" stroke="#d0d0d0" stroke-width="1.4" stroke-dasharray="1.5 1"/><path d="M3 3 L11 11 M11 3 L3 11" stroke="#d0d0d0" stroke-width="2.2"/></svg>
<svg style="position:absolute;left:2728px;top:766px;" width="13" height="13" viewBox="0 0 13 13"><path d="M10.5 4 A5 5 0 1 0 11.5 8" fill="none" stroke="#bdbdbd" stroke-width="1.6"/><path d="M12.3 0.8 V5.5 H7.6 Z" fill="#bdbdbd"/></svg>
<svg style="position:absolute;left:2790.5px;top:765px;" width="15" height="15" viewBox="0 0 15 15"><path d="M2 6 L5 2 H11 L13 5 V13 H2 Z" fill="none" stroke="#bdbdbd" stroke-width="1.4" stroke-dasharray="2 1"/><rect x="2" y="9" width="11" height="4" fill="#bdbdbd"/></svg>
<div style="left:2637px;top:786px;width:3px;height:2px;background:#bbb;"></div>
<div style="left:2642px;top:786px;width:3px;height:2px;background:#bbb;"></div>
<div style="left:2647px;top:786px;width:3px;height:2px;background:#bbb;"></div>
<div style="left:2453px;top:816px;width:381px;height:800px;background:#454545;border:1px solid #555;border-bottom:none;"></div>
<div style="left:2522px;top:794px;width:148.5px;height:22px;background:#2b2b2b;"></div>
<div style="left:2609px;top:794px;width:1px;height:22px;background:#3d3d3d;"></div>
<div style="left:2453px;top:791.5px;width:69.5px;height:26px;background:#454545;border:1px solid #555;border-bottom:none;"></div>
<svg style="position:absolute;left:2456px;top:797px;" width="13" height="13" viewBox="0 0 13 13"><path d="M3 1 H13 L10.5 4 H.5 Z M3 5 H13 L10.5 8 H.5 Z M3 9 H13 L10.5 12 H.5 Z" fill="#d0d0d0"/></svg>
<span class="t" style="left:2471.00px;top:796.11px;font-size:17px;line-height:17px;color:#e2e2e2;letter-spacing:-0.587px;">Layers</span>
<svg style="position:absolute;left:2524.5px;top:798px;" width="13" height="13" viewBox="0 0 13 13"><rect x=".7" y=".7" width="11.6" height="11.6" fill="none" stroke="#aaa" stroke-width="1.2"/><path d="M4.5 1 V12 M8.5 1 V12" stroke="#aaa" stroke-width="1.2"/></svg>
<span class="t" style="left:2539.00px;top:796.31px;font-size:17px;line-height:17px;color:#e2e2e2;letter-spacing:-0.603px;">Channels</span>
<svg style="position:absolute;left:2611px;top:799px;" width="14" height="11" viewBox="0 0 14 11"><path d="M1 3 C4 6 10 6 13 3" fill="none" stroke="#bbb" stroke-width="1.5"/><path d="M4.5 5 L2 10 M9.5 5 L12 10" stroke="#bbb" stroke-width="1.5"/><rect x="5.5" y="2.5" width="3" height="3" fill="#bbb"/></svg>
<span class="t" style="left:2626.00px;top:796.31px;font-size:17px;line-height:17px;color:#e2e2e2;letter-spacing:-0.494px;">Paths</span>
<svg style="position:absolute;left:2817.6px;top:798px;" width="11" height="10" viewBox="0 0 11 10"><rect x=".5" y=".5" width="10" height="9" fill="none" stroke="#b5b5b5"/><path d="M8 2 V8 L3 5 Z" fill="#b5b5b5"/></svg>
<div style="left:2456.5px;top:820px;width:324px;height:33.5px;background:#2b2b2b;border:1px solid #1a1a1a;border-radius:3px;"></div>
<span class="t" style="left:2463.00px;top:829.11px;font-size:17px;line-height:17px;color:#e0e0e0;letter-spacing:-0.630px;">Mode</span>
<span class="t" style="left:2696.40px;top:829.11px;font-size:17px;line-height:17px;color:#e0e0e0;letter-spacing:-0.297px;">Normal</span>
<svg style="position:absolute;left:2759px;top:832px;" width="13" height="9" viewBox="0 0 13 9"><path d="M1 1.5 L6.5 7 L12 1.5" fill="none" stroke="#e6e6e6" stroke-width="1.6"/></svg>
<div style="left:2782.5px;top:820px;width:48px;height:33.5px;background:#2b2b2b;border:1px solid #1a1a1a;border-radius:3px;"></div>
<svg style="position:absolute;left:2788px;top:830px;" width="12" height="13" viewBox="0 0 12 13"><path d="M3 3.5 A4.6 4.6 0 1 1 5.5 11.3" fill="none" stroke="#d0d0d0" stroke-width="1.5"/><path d="M.8 1 V5.3 H5 Z" fill="#d0d0d0"/><circle cx="2.6" cy="9" r="1.2" fill="#d0d0d0"/></svg>
<svg style="position:absolute;left:2809px;top:832px;" width="13" height="9" viewBox="0 0 13 9"><path d="M1 1.5 L6.5 7 L12 1.5" fill="none" stroke="#e6e6e6" stroke-width="1.6"/></svg>
<div style="left:2456px;top:856px;width:374.5px;height:24px;background:#575757;border:1px solid #6a6a6a;"></div>
<div style="left:2818px;top:857px;width:1.5px;height:22px;background:#1a1a1a;"></div>
<span class="t" style="left:2458.00px;top:860.21px;font-size:17px;line-height:17px;color:#e6e6e6;letter-spacing:-0.233px;">Opacity</span>
<span class="t" style="left:2776.50px;top:860.21px;font-size:17px;line-height:17px;color:#e6e6e6;letter-spacing:-0.407px;">100.0</span>
<svg style="position:absolute;left:2820px;top:859px;" width="9" height="18" viewBox="0 0 9 18"><path d="M1 6 L4.5 2.5 L8 6" fill="none" stroke="#888" stroke-width="1.4"/><path d="M1 12 L4.5 15.5 L8 12" fill="none" stroke="#ddd" stroke-width="1.4"/></svg>
<span class="t" style="left:2456.00px;top:885.11px;font-size:17px;line-height:17px;color:#e0e0e0;letter-spacing:-0.526px;">Lock:</span>
<svg style="position:absolute;left:2501px;top:886px;" width="14" height="14" viewBox="0 0 14 14"><path d="M13 1 C9 4 6 7 4.5 9.5 L6 10.8 C8.5 8 11 5 13 1 Z M4 10.3 L5.6 11.6 C5.5 13.3 3.5 14 .5 13.5 C2.5 12.5 2.3 10.8 4 10.3 Z" fill="#cfcfcf"/></svg>
<svg style="position:absolute;left:2525px;top:886px;" width="14" height="14" viewBox="0 0 14 14"><path d="M7 .5 L9.6 3.8 H7.8 V6.2 H10.2 V4.4 L13.5 7 L10.2 9.6 V7.8 H7.8 V10.2 H9.6 L7 13.5 L4.4 10.2 H6.2 V7.8 H3.8 V9.6 L.5 7 L3.8 4.4 V6.2 H6.2 V3.8 H4.4 Z" fill="#cfcfcf"/></svg>
<svg style="position:absolute;left:2548.5px;top:886.5px;" width="14" height="14" viewBox="0 0 14 14"><rect width="14" height="14" fill="#6a6a6a"/><path d="M0 0 h3.5 v3.5 h-3.5 Z M7 0 h3.5 v3.5 h-3.5 Z M3.5 3.5 h3.5 v3.5 h-3.5 Z M10.5 3.5 h3.5 v3.5 h-3.5 Z M0 7 h3.5 v3.5 h-3.5 Z M7 7 h3.5 v3.5 h-3.5 Z M3.5 10.5 h3.5 v3.5 h-3.5 Z M10.5 10.5 h3.5 v3.5 h-3.5 Z" fill="#c8c8c8"/></svg>
<div style="left:2456.5px;top:907px;width:374.5px;height:683px;background:#2e2e2e;border-radius:0 0 3px 3px;"></div>
<div style="left:2457px;top:907px;width:373.5px;height:30px;background:#4a4a4a;border:1px solid #3a3a3a;"></div>
<div style="left:2484.5px;top:907px;width:1px;height:30px;background:#3a3a3a;"></div>
<div style="left:2512.5px;top:907px;width:1px;height:30px;background:#3a3a3a;"></div>
<svg style="position:absolute;left:2464px;top:916px;" width="14" height="10" viewBox="0 0 14 10"><path d="M.8 5 C3.5 .8 10.5 .8 13.2 5 C10.5 9.2 3.5 9.2 .8 5 Z" fill="none" stroke="#c6c6c6" stroke-width="1.2"/><circle cx="7" cy="5" r="2" fill="#c6c6c6"/></svg>
<svg style="position:absolute;left:2494px;top:915px;" width="9" height="13" viewBox="0 0 9 13"><rect x="1.5" y=".8" width="6" height="5" rx="1" fill="none" stroke="#c6c6c6" stroke-width="1.4"/><path d="M4.5 5.5 V8 M2 12.5 C2 9 7 9 7 12.5" fill="none" stroke="#c6c6c6" stroke-width="1.4"/></svg>
<div style="left:2457px;top:937px;width:373.5px;height:40px;background:#1f1f1f;"></div>
<svg style="position:absolute;left:2461.5px;top:950px;" width="19" height="14" viewBox="0 0 19 14"><path d="M1 7 C5 .8 14 .8 18 7 C14 13.2 5 13.2 1 7 Z" fill="none" stroke="#dedede" stroke-width="1.5"/><circle cx="9.5" cy="7" r="3" fill="#dedede"/></svg>
<div style="left:2531.7px;top:939.5px;width:36.2px;height:35.4px;background:#3f4450;border:2px solid #f4f4f4;"></div>
<div style="left:2536.7px;top:944.5px;width:26px;height:25.5px;background:linear-gradient(#0a8cff,#0068f5);border-radius:6px;"></div>
<span class="t" style="left:2543.50px;top:951.77px;font-size:11.5px;line-height:11.5px;color:#fff;letter-spacing:0.118px;font-weight:bold;">{ }</span>
<span class="t" style="left:2572.00px;top:948.61px;font-size:17px;line-height:17px;color:#ececec;letter-spacing:0.514px;font-weight:bold;">icon-512.png</span>
<div style="left:2453px;top:1590px;width:381.5px;height:26px;background:#3d3d3d;"></div>
<svg style="position:absolute;left:2471.5px;top:1596px;" width="13" height="15" viewBox="0 0 13 15"><path d="M3.5 3.5 H11.5 V14 H2 V5 Z" fill="none" stroke="#bdbdbd" stroke-width="1.5"/><path d="M3.5 0 V5 M1 2.5 H6" stroke="#bdbdbd" stroke-width="1.3"/></svg>
<svg style="position:absolute;left:2518px;top:1596px;" width="15" height="14" viewBox="0 0 15 14"><path d="M.8 13 V1 H5.5 L7 3 H14 V13 Z" fill="#bdbdbd"/><path d="M9.5 5.5 V11.5 M6.5 8.5 H12.5" stroke="#2e2e2e" stroke-width="1.8"/></svg>
<svg style="position:absolute;left:2566px;top:1599px;" width="13" height="8" viewBox="0 0 13 8"><path d="M1 7 L6.5 1.5 L12 7" fill="none" stroke="#e0e0e0" stroke-width="1.6"/></svg>
<svg style="position:absolute;left:2613px;top:1599px;" width="13" height="8" viewBox="0 0 13 8"><path d="M1 1 L6.5 6.5 L12 1" fill="none" stroke="#e0e0e0" stroke-width="1.6"/></svg>
<svg style="position:absolute;left:2660px;top:1597px;" width="14" height="12" viewBox="0 0 14 12"><rect x=".8" y=".8" width="8" height="6.5" fill="none" stroke="#9a9a9a" stroke-width="1.4"/><rect x="5" y="4.5" width="8" height="6.5" fill="#454545" stroke="#9a9a9a" stroke-width="1.4"/></svg>
<svg style="position:absolute;left:2706px;top:1596px;" width="15" height="14" viewBox="0 0 15 14"><path d="M3 1.5 H10 L8 4 H1 Z M3 5.5 H10 L8 8 H1 Z M3 9.5 H10 L8 12 H1 Z" fill="#bdbdbd"/><path d="M12.5 2 V11 M10.5 9 L12.5 12 L14.5 9" stroke="#bdbdbd" stroke-width="1.4" fill="none"/></svg>
<div style="left:2741px;top:1593.5px;width:40px;height:18px;border:1px dotted #e8e8e8;"></div>
<svg style="position:absolute;left:2753px;top:1595px;" width="16" height="14" viewBox="0 0 16 14"><circle cx="8" cy="3.5" r="2.6" fill="none" stroke="#bdbdbd" stroke-width="1.3"/><path d="M1 13 L4 8.5 H12 L15 10.5 L13 13 Z" fill="#bdbdbd"/></svg>
<svg style="position:absolute;left:2800.5px;top:1595.5px;" width="15" height="15" viewBox="0 0 15 15"><rect x=".5" y=".5" width="14" height="14" fill="#e0e0e0"/><path d="M3.5 3.5 L11.5 11.5 M11.5 3.5 L3.5 11.5" stroke="#2a2a2a" stroke-width="2.3"/></svg>
<div style="left:2834.5px;top:0px;width:9.5px;height:1618px;background:#131313;"></div>
<div style="left:2824.5px;top:1606px;width:10px;height:10px;background:radial-gradient(circle at 0 0,rgba(19,19,19,0) 9.3px,#131313 10.2px);"></div>
<div style="left:5.5px;top:1606px;width:10px;height:10px;background:radial-gradient(circle at 10px 0,rgba(19,19,19,0) 9.3px,#131313 10.2px);"></div>
<div style="left:2824.5px;top:6.5px;width:10px;height:10px;background:radial-gradient(circle at 0 10px,rgba(19,19,19,0) 9.3px,#131313 10.2px);"></div>
<div style="left:323.5px;top:332.5px;width:816.3px;height:855px;background:#454545;border-radius:9px;box-shadow:0 0 0 1px #5a5a5a,0 24px 64px 2px rgba(0,0,0,.36),0 3px 14px 0 rgba(0,0,0,.12);overflow:hidden;"><div style="left:0;top:0;width:817px;height:43.5px;background:#f3f3f3;"></div></div>
<svg style="position:absolute;left:335px;top:341px" width="24" height="24" viewBox="0 0 24 24">
<rect width="24" height="24" fill="#3d4454"/>
<rect x="2.5" y="2" width="19" height="19.5" rx="5" fill="#0a7cff"/>
<g transform="translate(0.5 3.2)"><path d="M6 7.5 C7 5.5 9.5 5.5 11 7 L13 4 C15 2.5 18 3 19.5 5 L23.5 0.5 L23 8 C22.5 10 21.5 11.5 20 12 L22.5 15 L18.5 13.5 C16 14.5 13 14 11 12.5 L9 11 C7.5 10.5 6 9.5 6 7.5 Z" fill="#bdbdbd"/>
<circle cx="14.3" cy="7" r="1.8" fill="#0a7cff"/><circle cx="18.3" cy="6.8" r="1.6" fill="#0a7cff"/>
<path d="M9.5 10.5 L10 14.5 L11 15.5 M14.3 8 L14.3 9 M15 13 L14.5 15.3" stroke="#fff" stroke-width="1.3" fill="none"/></g>
</svg>
<span class="t" style="left:367.40px;top:344.76px;font-size:18px;line-height:18px;color:#8f8f8f;letter-spacing:-0.220px;">Export Image</span>
<svg style="position:absolute;left:1107px;top:345.5px;" width="17" height="17" viewBox="0 0 17 17"><path d="M1 1 L16 16 M16 1 L1 16" stroke="#8a8a8a" stroke-width="1.3"/></svg>
<span class="t" style="left:334.50px;top:393.15px;font-size:20.5px;line-height:20.5px;color:#dedede;letter-spacing:-0.775px;">Name:</span>
<div style="left:473.4px;top:386.3px;width:656.4px;height:31.4px;background:#1f1f1f;border:2px solid #3b3b3b;"></div>
<div style="left:476.7px;top:389px;width:76.2px;height:26.2px;background:#3a3a3a;"></div>
<span class="t" style="left:477.50px;top:393.15px;font-size:20.5px;line-height:20.5px;color:#ececec;letter-spacing:-0.394px;">icon-512.png</span>
<span class="t" style="left:334.50px;top:440.85px;font-size:20.5px;line-height:20.5px;color:#dedede;letter-spacing:-0.403px;">Save in folder:</span>
<div style="left:473.4px;top:430.2px;width:28.5px;height:39.5px;background:#2b2b2b;border:1px solid #1a1a1a;border-radius:4px;"></div>
<svg style="position:absolute;left:482px;top:441px;" width="10" height="16" viewBox="0 0 10 16"><path d="M8 1.5 L2 8 L8 14.5" fill="none" stroke="#e6e6e6" stroke-width="1.5"/></svg>
<div style="left:501.4px;top:430.2px;width:72.6px;height:39.5px;background:#1f1f1f;border:1px solid #1a1a1a;border-radius:4px;"></div>
<span class="t" style="left:507.20px;top:440.85px;font-size:20.5px;line-height:20.5px;color:#9c9c9c;letter-spacing:-0.338px;font-weight:bold;">assets</span>
<div style="left:961px;top:430.2px;width:29px;height:39.5px;background:#2b2b2b;border:1px solid #1a1a1a;border-radius:4px;"></div>
<svg style="position:absolute;left:971px;top:441px;" width="10" height="16" viewBox="0 0 10 16"><path d="M2 1.5 L8 8 L2 14.5" fill="none" stroke="#e6e6e6" stroke-width="1.5"/></svg>
<div style="left:1002px;top:430.2px;width:127.8px;height:39.5px;background:#2b2b2b;border:1px solid #1a1a1a;border-radius:4px;"></div>
<span class="t" style="left:1007.40px;top:440.85px;font-size:20.5px;line-height:20.5px;color:#dedede;letter-spacing:-0.609px;">Create Folder</span>
<div style="left:334.5px;top:494.8px;width:132px;height:35.5px;background:#494949;border:1px solid #383838;"></div>
<span class="t" style="left:339.40px;top:504.15px;font-size:20.5px;line-height:20.5px;color:#dedede;letter-spacing:-1.188px;">Places</span>
<div style="left:334.5px;top:530.2px;width:132px;height:285px;background:#2e2e2e;"></div>
<div style="left:467.6px;top:494.8px;width:14px;height:320.5px;background:#1f1f1f;"></div>
<div style="left:467.6px;top:494.8px;width:14px;height:290.5px;background:#5a5a5a;border:1px solid #3a3a3a;border-radius:2px;"></div>
<div style="left:334px;top:815px;width:147.6px;height:24px;background:linear-gradient(#2a2a2a,#3a3a3a);"></div>
<svg style="position:absolute;left:340px;top:822px;" width="12" height="12" viewBox="0 0 12 12"><path d="M6 .5 V11.5 M.5 6 H11.5" stroke="#c8c8c8" stroke-width="2"/></svg>
<div style="left:363px;top:827px;width:11px;height:2px;background:#6a6a6a;"></div>
<div style="left:336px;top:601px;width:128px;height:1px;background:#1c1c1c;"></div>
<span class="t" style="left:354.20px;top:538.95px;font-size:20.5px;line-height:20.5px;color:#dedede;letter-spacing:-1.125px;">Search</span>
<svg style="position:absolute;left:337px;top:540.8px;" width="13" height="13" viewBox="0 0 13 13"><circle cx="5" cy="5" r="3.6" fill="#d8e4f0" stroke="#9a9a9a" stroke-width="1.2"/><path d="M7.8 7.8 L12 12" stroke="#9a9a9a" stroke-width="1.8"/></svg>
<span class="t" style="left:354.20px;top:573.15px;font-size:20.5px;line-height:20.5px;color:#dedede;letter-spacing:-0.503px;">Recently ...</span>
<svg style="position:absolute;left:337px;top:575px;" width="13" height="13" viewBox="0 0 13 13"><path d="M1.5 1 H11 L9 4 H3 Z M1.5 5 H11 L9 8 H3 Z M1.5 9 H11 L9 12 H3 Z" fill="#b5b5b5"/></svg>
<span class="t" style="left:354.20px;top:611.15px;font-size:20.5px;line-height:20.5px;color:#dedede;letter-spacing:-0.087px;">info</span>
<svg style="position:absolute;left:337px;top:614px;" width="14" height="13" viewBox="0 0 14 13"><path d="M.5 12.5 V1.5 H5 L6.5 3.5 H13.5 V12.5 Z" fill="#cfcfb0"/><path d="M.5 4.5 H13.5" stroke="#e4e4c8" stroke-width="1"/></svg>
<span class="t" style="left:354.20px;top:645.15px;font-size:20.5px;line-height:20.5px;color:#dedede;letter-spacing:-0.400px;">Desktop</span>
<svg style="position:absolute;left:337px;top:648px;" width="14" height="13" viewBox="0 0 14 13"><path d="M.5 12.5 V1.5 H5 L6.5 3.5 H13.5 V12.5 Z" fill="#cfcfb0"/><path d="M.5 4.5 H13.5" stroke="#e4e4c8" stroke-width="1"/></svg>
<span class="t" style="left:354.20px;top:679.15px;font-size:20.5px;line-height:20.5px;color:#dedede;letter-spacing:-1.054px;">HP PANTA...</span>
<svg style="position:absolute;left:337px;top:685px;" width="13" height="8" viewBox="0 0 13 8"><path d="M1 5.5 C1 2 3 1 6.5 1 C10 1 12 2 12 5.5 Z" fill="#e8e8e8"/><rect x="1" y="5" width="11" height="2.2" fill="#5c6c5c"/></svg>
<span class="t" style="left:354.20px;top:713.15px;font-size:20.5px;line-height:20.5px;color:#dedede;letter-spacing:-0.692px;">HDD_1_Z...</span>
<svg style="position:absolute;left:337px;top:719px;" width="13" height="8" viewBox="0 0 13 8"><path d="M1 5.5 C1 2 3 1 6.5 1 C10 1 12 2 12 5.5 Z" fill="#e8e8e8"/><rect x="1" y="5" width="11" height="2.2" fill="#5c6c5c"/></svg>
<span class="t" style="left:354.20px;top:747.15px;font-size:20.5px;line-height:20.5px;color:#dedede;letter-spacing:-0.542px;">Local Disk...</span>
<svg style="position:absolute;left:337px;top:749px;" width="14" height="13" viewBox="0 0 14 13"><rect x=".5" y="1" width="5" height="4" fill="#4aa3e8"/><rect x="6.5" y="1" width="5" height="4" fill="#4aa3e8"/><rect x=".5" y="6" width="5" height="4" fill="#4aa3e8"/><rect x="6.5" y="6" width="5" height="4" fill="#4aa3e8"/><path d="M7 8.5 C9 7 11 8 13 11.5" stroke="#e8e8e8" stroke-width="1.6" fill="none"/></svg>
<span class="t" style="left:354.20px;top:780.65px;font-size:20.5px;line-height:20.5px;color:#dedede;letter-spacing:-0.644px;">Pictures</span>
<svg style="position:absolute;left:337px;top:783.5px;" width="14" height="13" viewBox="0 0 14 13"><path d="M.5 12.5 V1.5 H5 L6.5 3.5 H13.5 V12.5 Z" fill="#bdbdbd"/><path d="M.5 4.5 H13.5" stroke="#d8d8d8" stroke-width="1"/></svg>
<div style="left:482.2px;top:657.5px;width:1.5px;height:3.2px;background:#c8c8c8;"></div>
<div style="left:482.2px;top:664.5px;width:1.5px;height:3.2px;background:#c8c8c8;"></div>
<div style="left:482.2px;top:671.5px;width:1.5px;height:3.2px;background:#c8c8c8;"></div>
<div style="left:484.3px;top:494.8px;width:461.3px;height:35.5px;background:#494949;border:1px solid #383838;"></div>
<div style="left:760.5px;top:495.8px;width:1px;height:33.5px;background:#383838;"></div>
<div style="left:855.6px;top:495.8px;width:1px;height:33.5px;background:#383838;"></div>
<span class="t" style="left:490.40px;top:504.15px;font-size:20.5px;line-height:20.5px;color:#dedede;letter-spacing:-1.170px;">Name</span>
<svg style="position:absolute;left:741.5px;top:509.5px;" width="14" height="9" viewBox="0 0 14 9"><path d="M1 7.5 L7 1.5 L13 7.5" fill="none" stroke="#e6e6e6" stroke-width="1.6"/></svg>
<span class="t" style="left:766.00px;top:504.15px;font-size:20.5px;line-height:20.5px;color:#dedede;letter-spacing:-1.170px;">Size</span>
<span class="t" style="left:861.00px;top:504.15px;font-size:20.5px;line-height:20.5px;color:#dedede;letter-spacing:-0.373px;">Modified</span>
<div style="left:484.3px;top:530.2px;width:463.3px;height:309px;background:#2e2e2e;"></div>
<div style="left:947.6px;top:494.8px;width:14px;height:344.5px;background:#5a5a5a;border:1px solid #3a3a3a;border-radius:2px;"></div>
<span class="t" style="left:504.60px;top:538.95px;font-size:20.5px;line-height:20.5px;color:#dedede;letter-spacing:-0.736px;">pdfs</span>
<span class="t" style="left:860.20px;top:538.95px;font-size:20.5px;line-height:20.5px;color:#dedede;letter-spacing:-0.594px;">Unknown</span>
<svg style="position:absolute;left:487px;top:541.3px;" width="14" height="13" viewBox="0 0 14 13"><path d="M.5 12.5 V1.5 H5 L6.5 3.5 H13.5 V12.5 Z" fill="#c4c4c4"/><path d="M.5 4.5 H13.5" stroke="#e0e0e0" stroke-width="1"/></svg>
<span class="t" style="left:504.60px;top:572.95px;font-size:20.5px;line-height:20.5px;color:#dedede;letter-spacing:-0.008px;">textdateien</span>
<span class="t" style="left:860.20px;top:572.95px;font-size:20.5px;line-height:20.5px;color:#dedede;letter-spacing:-0.594px;">Unknown</span>
<svg style="position:absolute;left:487px;top:575.3px;" width="14" height="13" viewBox="0 0 14 13"><path d="M.5 12.5 V1.5 H5 L6.5 3.5 H13.5 V12.5 Z" fill="#c4c4c4"/><path d="M.5 4.5 H13.5" stroke="#e0e0e0" stroke-width="1"/></svg>
<span class="t" style="left:504.60px;top:606.95px;font-size:20.5px;line-height:20.5px;color:#dedede;letter-spacing:-0.441px;">favicon.ico</span>
<span class="t" style="left:765.60px;top:606.95px;font-size:20.5px;line-height:20.5px;color:#dedede;letter-spacing:-0.702px;">17.0 kB</span>
<span class="t" style="left:860.20px;top:606.95px;font-size:20.5px;line-height:20.5px;color:#dedede;letter-spacing:-0.594px;">Unknown</span>
<svg style="position:absolute;left:488px;top:608.3px;" width="12" height="14" viewBox="0 0 12 14"><path d="M.5 .5 H8 L11.5 4 V13.5 H.5 Z" fill="#f4f4f4"/><path d="M8 .5 V4 H11.5" fill="#cfcfcf"/></svg>
<span class="t" style="left:504.60px;top:640.95px;font-size:20.5px;line-height:20.5px;color:#dedede;letter-spacing:-0.439px;">favicon_16.png</span>
<span class="t" style="left:765.60px;top:640.95px;font-size:20.5px;line-height:20.5px;color:#dedede;letter-spacing:-0.310px;">435 bytes</span>
<span class="t" style="left:860.20px;top:640.95px;font-size:20.5px;line-height:20.5px;color:#dedede;letter-spacing:-0.594px;">Unknown</span>
<svg style="position:absolute;left:488px;top:642.3px;" width="12" height="14" viewBox="0 0 12 14"><path d="M.5 .5 H8 L11.5 4 V13.5 H.5 Z" fill="#f4f4f4"/><path d="M8 .5 V4 H11.5" fill="#cfcfcf"/></svg>
<span class="t" style="left:504.60px;top:674.95px;font-size:20.5px;line-height:20.5px;color:#dedede;letter-spacing:-0.439px;">favicon_64.png</span>
<span class="t" style="left:765.60px;top:674.95px;font-size:20.5px;line-height:20.5px;color:#dedede;letter-spacing:-0.469px;">1.3 kB</span>
<span class="t" style="left:860.20px;top:674.95px;font-size:20.5px;line-height:20.5px;color:#dedede;letter-spacing:-0.594px;">Unknown</span>
<svg style="position:absolute;left:488px;top:676.3px;" width="12" height="14" viewBox="0 0 12 14"><path d="M.5 .5 H8 L11.5 4 V13.5 H.5 Z" fill="#f4f4f4"/><path d="M8 .5 V4 H11.5" fill="#cfcfcf"/></svg>
<span class="t" style="left:504.60px;top:708.95px;font-size:20.5px;line-height:20.5px;color:#dedede;letter-spacing:-0.331px;">hero-bg.png</span>
<span class="t" style="left:765.60px;top:708.95px;font-size:20.5px;line-height:20.5px;color:#dedede;letter-spacing:-0.807px;">1.1 MB</span>
<span class="t" style="left:860.20px;top:708.95px;font-size:20.5px;line-height:20.5px;color:#dedede;letter-spacing:-0.594px;">Unknown</span>
<svg style="position:absolute;left:488px;top:710.3px;" width="12" height="14" viewBox="0 0 12 14"><path d="M.5 .5 H8 L11.5 4 V13.5 H.5 Z" fill="#f4f4f4"/><path d="M8 .5 V4 H11.5" fill="#cfcfcf"/></svg>
<span class="t" style="left:504.60px;top:742.95px;font-size:20.5px;line-height:20.5px;color:#dedede;letter-spacing:-0.385px;">icon-192.png</span>
<span class="t" style="left:765.60px;top:742.95px;font-size:20.5px;line-height:20.5px;color:#dedede;letter-spacing:-0.414px;">884.1 kB</span>
<span class="t" style="left:860.20px;top:742.95px;font-size:20.5px;line-height:20.5px;color:#dedede;letter-spacing:-0.594px;">Unknown</span>
<svg style="position:absolute;left:488px;top:744.3px;" width="12" height="14" viewBox="0 0 12 14"><path d="M.5 .5 H8 L11.5 4 V13.5 H.5 Z" fill="#f4f4f4"/><path d="M8 .5 V4 H11.5" fill="#cfcfcf"/></svg>
<span class="t" style="left:504.60px;top:776.95px;font-size:20.5px;line-height:20.5px;color:#dedede;letter-spacing:-0.402px;">icon-512.png</span>
<span class="t" style="left:765.60px;top:776.95px;font-size:20.5px;line-height:20.5px;color:#dedede;letter-spacing:-0.807px;">1.5 MB</span>
<span class="t" style="left:860.20px;top:776.95px;font-size:20.5px;line-height:20.5px;color:#dedede;letter-spacing:-0.594px;">Unknown</span>
<div style="left:487.5px;top:778.3px;width:13px;height:13px;background:#0a6cff;border:1px solid #223;"></div>
<span class="t" style="left:490.30px;top:781.25px;font-size:7.5px;line-height:7.5px;color:#fff;font-weight:bold;">()</span>
<span class="t" style="left:504.60px;top:810.95px;font-size:20.5px;line-height:20.5px;color:#dedede;letter-spacing:-0.275px;">moodlekurs_1.jpg</span>
<span class="t" style="left:765.60px;top:810.95px;font-size:20.5px;line-height:20.5px;color:#dedede;letter-spacing:-0.445px;">36.7 kB</span>
<span class="t" style="left:860.20px;top:810.95px;font-size:20.5px;line-height:20.5px;color:#dedede;letter-spacing:-0.594px;">Unknown</span>
<svg style="position:absolute;left:488px;top:812.3px;" width="12" height="14" viewBox="0 0 12 14"><path d="M.5 .5 H8 L11.5 4 V13.5 H.5 Z" fill="#f4f4f4"/><path d="M8 .5 V4 H11.5" fill="#cfcfcf"/></svg>
<div style="left:974px;top:494.8px;width:156px;height:344.5px;background:#2e2e2e;"></div>
<div style="left:975.3px;top:495.6px;width:153.3px;height:34.8px;background:#2b2b2b;border:1px solid #1a1a1a;border-radius:3px;"></div>
<span class="t" style="left:980.50px;top:504.15px;font-size:20.5px;line-height:20.5px;color:#b5b5b5;letter-spacing:-0.630px;">Preview</span>
<div style="left:1019.7px;top:564.5px;width:64.6px;height:64.6px;border:8px solid #bdbdbd;border-radius:50%;"></div>
<span class="t" style="left:1038.20px;top:574.41px;font-size:45px;line-height:45px;color:#bdbdbd;font-weight:bold;-webkit-text-stroke:1.2px #bdbdbd;">?</span>
<span class="t" style="left:998.20px;top:671.27px;font-size:20.0px;line-height:20.0px;color:#9c9c9c;letter-spacing:-0.046px;font-style:italic;">No selection</span>
<div style="left:336px;top:860.3px;width:13px;height:12.6px;background:#1f1f1f;border-radius:3px;"></div>
<span class="t" style="left:354.20px;top:857.45px;font-size:20.5px;line-height:20.5px;color:#dedede;letter-spacing:-0.429px;">Show All Files</span>
<div style="left:336px;top:894.2px;width:13px;height:12.8px;background:#1f1f1f;border-radius:3px;"></div>
<div style="left:338.7px;top:899.3px;width:7.6px;height:2.8px;background:#f2f2f2;"></div>
<span class="t" style="left:353.00px;top:891.75px;font-size:20.5px;line-height:20.5px;color:#dedede;letter-spacing:-0.324px;">Select File Type (By Extension)</span>
<div style="left:334.5px;top:952px;width:780.5px;height:163.5px;background:#2e2e2e;overflow:hidden;"></div>
<div style="left:1115px;top:917px;width:15px;height:198.5px;background:#1f1f1f;"></div>
<div style="left:1116px;top:948px;width:13px;height:27px;background:#676767;border-radius:2px;"></div>
<div style="left:334.5px;top:952.3px;width:780.5px;height:163.2px;overflow:hidden;">
<span class="t" style="left:4.90px;top:-17.85px;font-size:20.5px;line-height:20.5px;color:#e8e8e8;letter-spacing:-0.668px;">Digital Imaging and Communications in Medicine image</span>
<span class="t" style="left:512.70px;top:-17.85px;font-size:20.5px;line-height:20.5px;color:#e8e8e8;letter-spacing:-0.678px;">dcm,dicom</span>
<span class="t" style="left:4.90px;top:17.25px;font-size:20.5px;line-height:20.5px;color:#e8e8e8;letter-spacing:-0.523px;">Encapsulated PostScript image</span>
<span class="t" style="left:512.70px;top:17.25px;font-size:20.5px;line-height:20.5px;color:#e8e8e8;letter-spacing:-0.883px;">eps</span>
<span class="t" style="left:4.90px;top:51.45px;font-size:20.5px;line-height:20.5px;color:#e8e8e8;letter-spacing:-0.327px;">Flexible Image Transport System</span>
<span class="t" style="left:512.70px;top:51.45px;font-size:20.5px;line-height:20.5px;color:#e8e8e8;letter-spacing:0.371px;">fit,fits</span>
<span class="t" style="left:4.90px;top:85.35px;font-size:20.5px;line-height:20.5px;color:#e8e8e8;letter-spacing:-0.654px;">GIF image</span>
<span class="t" style="left:512.70px;top:85.35px;font-size:20.5px;line-height:20.5px;color:#e8e8e8;letter-spacing:0.217px;">gif</span>
<span class="t" style="left:4.90px;top:119.35px;font-size:20.5px;line-height:20.5px;color:#e8e8e8;letter-spacing:-0.654px;">GIF image</span>
<span class="t" style="left:512.70px;top:119.35px;font-size:20.5px;line-height:20.5px;color:#e8e8e8;letter-spacing:0.217px;">gif</span>
<span class="t" style="left:4.90px;top:153.35px;font-size:20.5px;line-height:20.5px;color:#e8e8e8;letter-spacing:-0.799px;">GIMP brush</span>
<span class="t" style="left:512.70px;top:153.35px;font-size:20.5px;line-height:20.5px;color:#e8e8e8;letter-spacing:0.291px;">gbr</span>
</div>
<div style="left:335px;top:917.1px;width:507.5px;height:35.9px;background:#2b2b2b;border:1px solid #1a1a1a;border-radius:3px;"></div>
<div style="left:842.5px;top:917.1px;width:271px;height:35.9px;background:#2b2b2b;border:1px solid #1a1a1a;border-radius:3px;"></div>
<span class="t" style="left:339.40px;top:925.55px;font-size:20.5px;line-height:20.5px;color:#dedede;letter-spacing:-0.444px;">File Type</span>
<span class="t" style="left:847.20px;top:925.55px;font-size:20.5px;line-height:20.5px;color:#dedede;letter-spacing:-0.567px;">Extensions</span>
<div style="left:341.4px;top:1135.2px;width:84.30000000000001px;height:35.4px;background:#2b2b2b;border:1px solid #1a1a1a;border-radius:3px;"></div>
<span class="t" style="left:363.70px;top:1144.15px;font-size:20.5px;line-height:20.5px;color:#dedede;letter-spacing:-0.540px;">Help</span>
<div style="left:947px;top:1135.2px;width:85px;height:35.4px;background:#2b2b2b;border:1px solid #1a1a1a;border-radius:3px;"></div>
<span class="t" style="left:961.10px;top:1144.15px;font-size:20.5px;line-height:20.5px;color:#dedede;letter-spacing:-0.408px;">Export</span>
<div style="left:1038px;top:1135.2px;width:84.59999999999991px;height:35.4px;background:#2b2b2b;border:1px solid #1a1a1a;border-radius:3px;"></div>
<span class="t" style="left:1051.00px;top:1144.15px;font-size:20.5px;line-height:20.5px;color:#dedede;letter-spacing:-0.985px;">Cancel</span>
</body></html>
